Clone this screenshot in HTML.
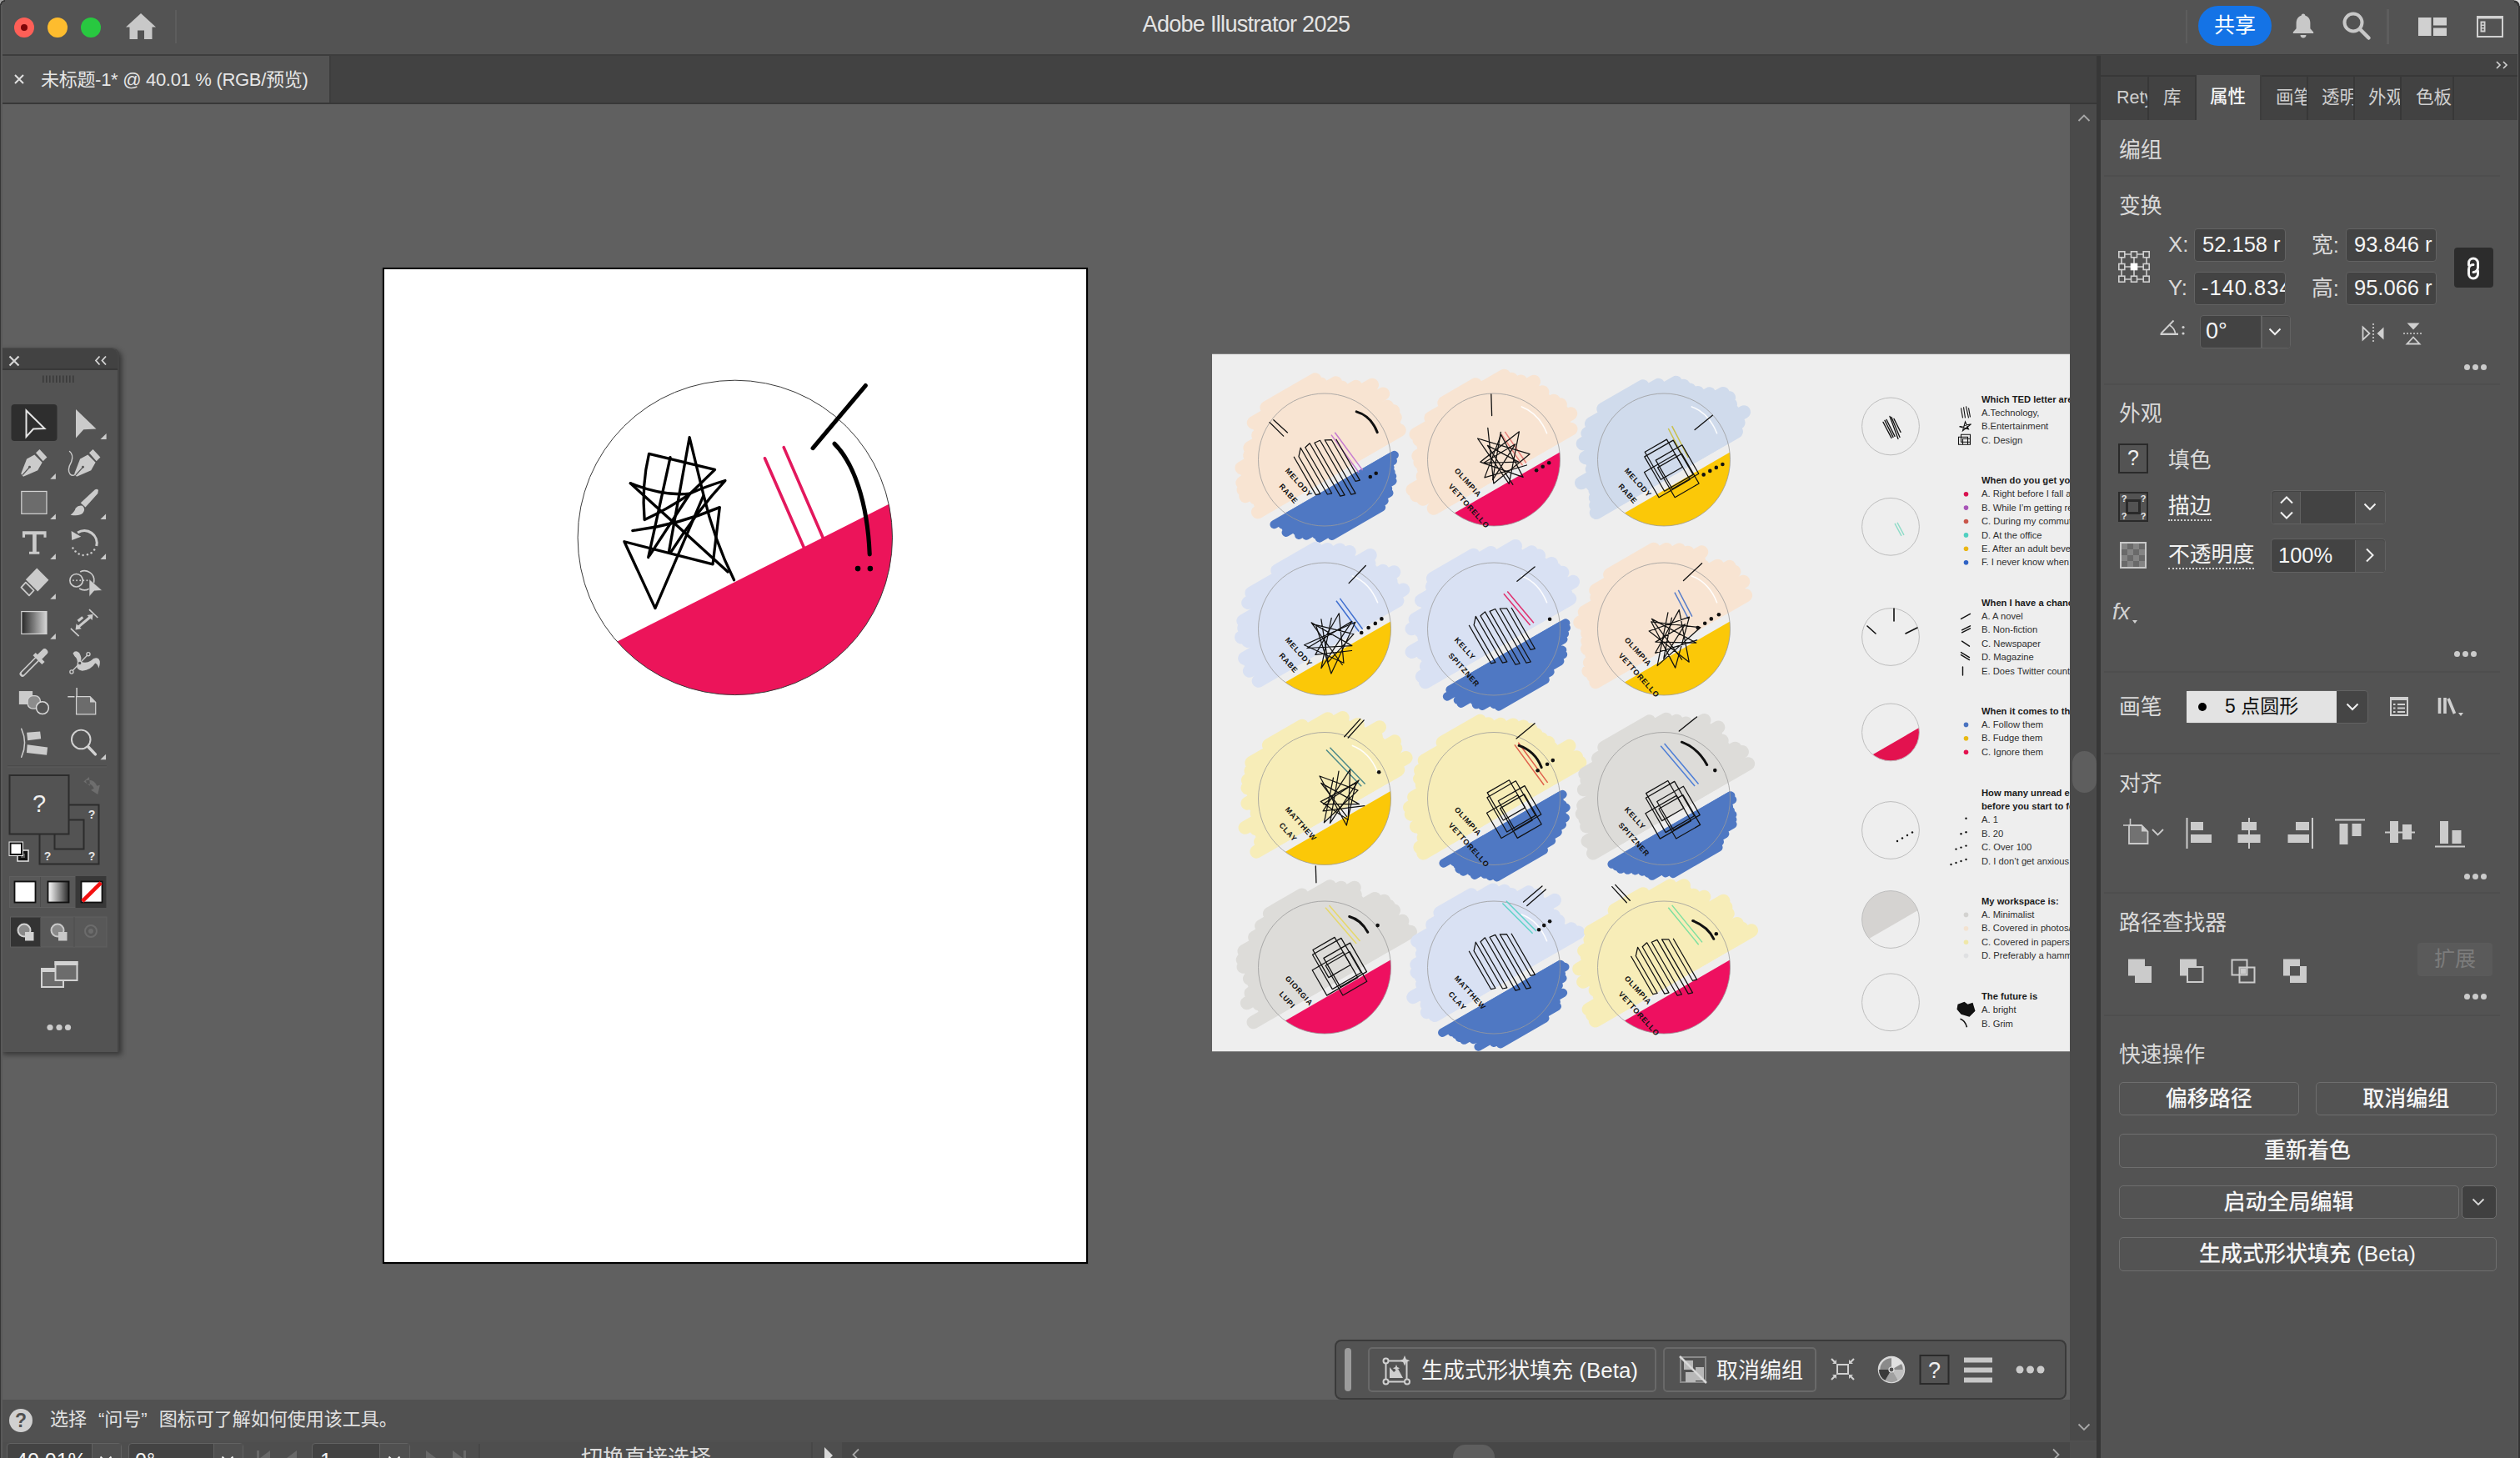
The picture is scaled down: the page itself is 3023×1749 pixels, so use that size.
<!DOCTYPE html>
<html lang="zh"><head><meta charset="utf-8"><title>Adobe Illustrator 2025</title>
<style>
*{box-sizing:border-box;margin:0;padding:0}
html,body{width:3023px;height:1749px;overflow:hidden;background:#606060;font-family:"Liberation Sans","Noto Sans CJK SC",sans-serif;color:#dcdcdc}
.a{position:absolute}
svg{position:absolute;overflow:visible}
#titlebar{left:0;top:0;width:3023px;height:67px;background:#535353;border-bottom:2px solid #3d3d3d}
#tabbar{left:0;top:67px;width:2516px;height:58px;background:#424242;border-bottom:2px solid #383838}
#doctab{left:0;top:0;width:397px;height:56px;background:#535353;border-right:2px solid #3d3d3d}
#canvas{left:0;top:125px;width:2483px;height:1554px;background:#606060;overflow:hidden}
#vscroll{left:2483px;top:125px;width:32px;height:1603px;background:#4a4a4a}
#vdiv{left:2515px;top:67px;width:5.500px;height:1682px;background:#373737}
#status{left:0;top:1679px;width:2483px;height:51px;background:#515151}
#bottombar{left:0;top:1730px;width:2516px;height:19px;background:#4e4e4e;overflow:hidden;box-shadow:0 -2px 0 #505050}
#rpanel{left:2520px;top:66px;width:503px;height:1683px;background:#535353}
.pg{position:absolute;left:-2520px;top:-66px;width:3023px;height:1749px}
.t{position:absolute;white-space:nowrap;font-size:25.800px;line-height:36px;color:#dadada}
.w{color:#f2f2f2}
.inp{position:absolute;background:#434343;border:1.500px solid #626262;border-radius:4px;color:#f5f5f5;font-size:25.500px;line-height:37px;white-space:nowrap;overflow:hidden}
.sep{position:absolute;left:2524px;width:475px;height:2px;background:#4e4e4e}
.btn{position:absolute;border:1.500px solid #6e6e6e;border-radius:5px;color:#f5f5f5;font-size:26px;font-weight:500;line-height:39px;text-align:center;white-space:nowrap}
.ptab{position:absolute;top:90px;height:54px;background:#424242;border-right:2px solid #383838;color:#cfcfcf;font-size:21.500px;line-height:52px;white-space:nowrap;overflow:hidden}
.dots i{position:absolute;width:7px;height:7px;border-radius:50%;background:#cbcbcb;top:0}
.ul{border-bottom:2px dotted #cfcfcf;line-height:31px}

</style></head><body>
<div id="titlebar" class="a"><div class="a" style="left:17px;top:21px;width:24px;height:24px;border-radius:50%;background:#fe5f57"></div>
<div class="a" style="left:25px;top:29px;width:8px;height:8px;border-radius:50%;background:#7e0508"></div>
<div class="a" style="left:57px;top:21px;width:24px;height:24px;border-radius:50%;background:#febc2e"></div>
<div class="a" style="left:97px;top:21px;width:24px;height:24px;border-radius:50%;background:#28c840"></div>
<svg style="left:151px;top:16px" width="36" height="32" viewBox="0 0 36 32"><path d="M18 0 L36 16.5 L31.5 16.5 L31.5 31 L22 31 L22 20.5 L14 20.5 L14 31 L4.5 31 L4.5 16.5 L0 16.5 Z" fill="#c8c8c8"/></svg>
<div class="a" style="left:210px;top:12px;width:2px;height:40px;background:#5d5d5d"></div>
<div class="a" id="apptitle" style="left:1295px;top:12px;width:400px;text-align:center;font-size:27px;line-height:34px;color:#e4e4e4;letter-spacing:-0.7px">Adobe Illustrator 2025</div>
<div class="a" style="left:2622px;top:12px;width:2px;height:40px;background:#5d5d5d"></div>
<div class="a" style="left:2637px;top:7px;width:88px;height:48px;border-radius:24px;background:#1473e6;color:#fff;font-size:25px;line-height:47px;text-align:center">共享</div>
<svg style="left:2749px;top:16px" width="28" height="30" viewBox="0 0 28 30"><path d="M14 0.5c1.5 0 2.4 1 2.4 2.3c4 1.2 6 4.600 6 9v6.500l3.800 4.200v1.500h-24.400v-1.500l3.800-4.200v-6.500c0-4.400 2-7.800 6-9c0-1.300 0.900-2.300 2.400-2.300z M10.500 26h7c0 2-1.500 3.500-3.500 3.500s-3.500-1.500-3.500-3.500z" fill="#c8c8c8"/></svg>
<svg style="left:2810px;top:14px" width="34" height="34" viewBox="0 0 34 34"><circle cx="13" cy="13" r="10.500" fill="none" stroke="#c8c8c8" stroke-width="4"/><path d="M21 21 L31.500 31.500" stroke="#c8c8c8" stroke-width="4.500" stroke-linecap="round"/></svg>
<div class="a" style="left:2863px;top:11px;width:3px;height:42px;background:#5d5d5d"></div>
<svg style="left:2901px;top:21px" width="34" height="22" viewBox="0 0 34 22"><rect x="0" y="0" width="15.500" height="22" fill="#d0d0d0"/><rect x="18" y="0" width="16" height="9.500" fill="#d0d0d0"/><rect x="18" y="12.500" width="16" height="9.500" fill="#d0d0d0"/></svg>
<svg style="left:2971px;top:19px" width="32" height="26" viewBox="0 0 32 26"><rect x="1" y="1" width="30" height="24" fill="none" stroke="#d0d0d0" stroke-width="2"/><rect x="0" y="0" width="32" height="3.500" fill="#d0d0d0"/><rect x="4.500" y="6.500" width="6" height="13" fill="#d0d0d0"/><rect x="6.300" y="8.500" width="2.400" height="2" fill="#535353"/><rect x="6.300" y="12" width="2.400" height="2" fill="#535353"/><rect x="6.300" y="15.500" width="2.400" height="2" fill="#535353"/></svg>
</div>
<div id="tabbar" class="a"><div id="doctab" class="a"><svg style="left:17px;top:22px" width="12" height="12" viewBox="0 0 12 12"><path d="M1 1L11 11M11 1L1 11" stroke="#e0e0e0" stroke-width="2"/></svg>
<div class="a" style="left:49px;top:12px;font-size:22px;line-height:34px;color:#e6e6e6;white-space:nowrap;letter-spacing:-0.3px">未标题-1* @ 40.01 % (RGB/预览)</div>
</div></div>
<div id="canvas" class="a"><div class="a" style="left:459px;top:196px;width:846px;height:1195px;background:#fff;border:2px solid #000;box-shadow:1px 1px 0 #555,-1.500px 0 0 #585858"></div>
<svg style="left:0;top:-125px" width="2485" height="1680" viewBox="0 0 2485 1680">
<defs><clipPath id="mc"><circle cx="881.8" cy="644.9" r="188.7"/></clipPath></defs>
<g transform="translate(640 400) scale(0.32916)" fill="none" stroke="#e3185d" stroke-width="11" stroke-linecap="round"><path d="M843 455 L992 795"/><path d="M912 415 L1065 768"/></g>
<g clip-path="url(#mc)"><path d="M742 768.7 L1066.3 604.7 L1200 540 L1200 900 L600 900 L600 840 Z" fill="#ec145a"/></g>
<circle cx="881.8" cy="644.9" r="188.7" fill="none" stroke="#3a3a3a" stroke-width="1"/>
<g transform="translate(640 400) scale(0.32916)" fill="none" stroke="#000" stroke-linecap="round" stroke-linejoin="round">

<g stroke-width="15.500"><path d="M1018 418 L1210 190"/><path d="M1097 402 C1165 470 1217 610 1225 805"/></g>
<circle cx="1182" cy="857" r="10" fill="#000" stroke="none"/><circle cx="1227" cy="857" r="10" fill="#000" stroke="none"/>
</g>
<g transform="translate(730 500) scale(0.16458)" fill="none" stroke="#000" stroke-width="20" stroke-linecap="round" stroke-linejoin="round">
<path d="M290 1025L450 295"/>
<path d="M440 985L590 150L690 560Q770 900 915 1190"/>
<path d="M295 270L775 385L590 565Q420 680 262 750Q240 500 295 270"/>
<path d="M160 485Q400 580 590 560Q730 500 850 465Q650 680 455 985"/>
<path d="M175 830Q500 790 810 660L760 1075L115 910L340 1395L690 580"/>
<path d="M160 485L870 1130"/>
<path d="M590 565L300 1010"/>
</g>
<clipPath id="imgclip"><rect x="1454" y="424.5" width="1106" height="837.0"/></clipPath>
<g id="refimg" clip-path="url(#imgclip)"><rect x="1454" y="424.5" width="1106" height="837.0" fill="#eeeeee"/>
<clipPath id="bc1"><circle cx="1589" cy="551.5" r="79.5"/></clipPath>
<path d="M1508.9 614.3L1678.8 516.2M1511.6 603.5L1672.9 510.4M1506.2 597.5L1673.8 500.7M1494.2 595.2L1671.4 492.9M1491.5 587.6L1664.3 487.8M1490.3 579.1L1651.6 486M1495.8 566.7L1659.2 472.4M1489.4 561.3L1640.2 474.2M1499.2 546.4L1646.1 461.6M1499.3 537.2L1626.5 463.8M1509.2 522.3L1609.6 464.4M1510.8 512.2L1602.4 459.3M1503.7 507.1L1584.5 460.5M1519.4 488.9L1577.5 455.3" stroke="#f8e4d2" stroke-width="15.9" stroke-linecap="round" fill="none"/>
<path clip-path="url(#bc1)" d="M1462.4 650.3L1737.8 491.3L1647.2 334.3L1371.8 493.3Z" fill="#f8e4d2"/>
<path clip-path="url(#bc1)" d="M1462.4 650.3L1737.8 491.3L1743 500.2L1467.6 659.2Z" fill="#eeeeee"/>
<path d="M1528.6 629.1L1672.7 545.9M1538.4 629.4L1670.8 552.9M1542.5 632.9L1667.4 560.9M1542.7 638.8L1668.5 566.2M1555.6 637.3L1670.1 571.2M1558.2 641.8L1670.4 577M1567.1 642.6L1665 586.1M1579.2 641.6L1666.3 591.3M1582.7 645.5L1660.5 600.7M1597.8 642.8L1657 608.6" stroke="#4f78c3" stroke-width="10.3" stroke-linecap="round" fill="none"/>
<path clip-path="url(#bc1)" d="M1467.2 658.5L1742.6 499.5L1806.2 609.7L1530.8 768.7Z" fill="#4f78c3"/>
<circle cx="1589" cy="551.5" r="79.5" fill="none" stroke="#9b9b9b" stroke-width="0.8"/>
<path d="M1597 521.6L1630.2 566.9M1601.3 518.8L1634.6 564.1" stroke="#c77bd0" stroke-width="1.5" fill="none"/>
<g fill="none" stroke="#111" stroke-width="1.25" stroke-linejoin="round" stroke-linecap="round"><polyline points="1552.3,548.2 1578.5,593.6 1583.8,592.4 1558,547.7 1560.2,537.2 1592.4,593 1597.6,591.8 1565.8,536.7 1571.2,531.8 1607.8,595.1 1613.1,593.9 1576.9,531.2 1583.5,528.3 1620.9,593.1 1626.1,591.9 1589.2,527.8 1597.4,527.7 1626,577.3 1631.3,576.1 1603,527.2"/></g>
<circle cx="1643.8" cy="572" r="2.3" fill="#111"/>
<circle cx="1650.7" cy="567.8" r="2.3" fill="#111"/>
<g fill="none" stroke="#111" stroke-width="1.3" stroke-linecap="round"><path d="M1523 506.6L1539.7 523.1"/><path d="M1527.8 503.8L1544.5 518.9"/><path d="M1627.2 493.9Q1644.7 499 1652.2 518.6" stroke-width="3"/></g>
<g transform="translate(1541.3 565) rotate(48)" font-size="9" font-weight="bold" fill="#111" font-family="Liberation Sans,sans-serif" letter-spacing="0.800"><text x="0" y="0">MELODY</text><text x="9" y="18">RABE</text></g>
<clipPath id="bc2"><circle cx="1792" cy="551.5" r="79.5"/></clipPath>
<path d="M1719.7 609.8L1884.5 514.6M1721 599.8L1876.8 509.9M1707 598.8L1884.3 496.3M1699 594.2L1874 493.1M1694.5 587.6L1871.9 485.2M1706.7 571.4L1863.9 480.6M1707.5 561.7L1852.3 478.2M1703.4 554.9L1850.4 470.1M1701.3 547L1839.6 467.1M1707.3 534.3L1840.1 457.7M1702.5 527.9L1824.5 457.5M1698.5 521L1813.3 454.7M1716.4 501.5L1804.4 450.7M1732.3 483.2L1770.2 461.2" stroke="#f8e4d2" stroke-width="15.9" stroke-linecap="round" fill="none"/>
<path clip-path="url(#bc2)" d="M1665.4 650.3L1940.8 491.3L1850.2 334.3L1574.8 493.3Z" fill="#f8e4d2"/>
<path clip-path="url(#bc2)" d="M1665.4 650.3L1940.8 491.3L1946 500.2L1670.6 659.2Z" fill="#eeeeee"/>
<path clip-path="url(#bc2)" d="M1670.2 658.5L1945.6 499.5L2009.2 609.7L1733.8 768.7Z" fill="#ee1060"/>
<circle cx="1792" cy="551.5" r="79.5" fill="none" stroke="#9b9b9b" stroke-width="0.8"/>
<path d="M1825.4 487.9Q1846.1 495.9 1855.6 519.7" stroke="#fff" stroke-width="1.6" fill="none" stroke-linecap="round" opacity="0.9"/>
<path d="M1800.9 520.6L1826.5 558.3M1805.3 517.8L1830.9 555.5" stroke="#e9827c" stroke-width="1.5" fill="none"/>
<g fill="none" stroke="#111" stroke-width="1.25" stroke-linejoin="round" stroke-linecap="round"><polyline points="1831.5,558 1780.9,572.9 1800.7,521.5 1827.1,572.4 1775.7,554.2 1822.4,517.8 1810.3,580.4 1772.6,526 1835,544.7 1791.8,579.9 1784.8,513.4"/><polyline points="1814.9,581.3 1784.4,534.4 1821.6,554.1 1779.8,555.3 1817.7,532.8 1790.6,575.7 1800.3,518.4"/></g>
<circle cx="1843.1" cy="564.3" r="2.3" fill="#111"/>
<circle cx="1850.7" cy="559.8" r="2.3" fill="#111"/>
<circle cx="1858.2" cy="555.2" r="2.3" fill="#111"/>
<g fill="none" stroke="#111" stroke-width="1.3" stroke-linecap="round"><path d="M1788.8 472.8L1789.6 498.6"/></g>
<g transform="translate(1744.3 565) rotate(48)" font-size="9" font-weight="bold" fill="#111" font-family="Liberation Sans,sans-serif" letter-spacing="0.800"><text x="0" y="0">OLIMPIA</text><text x="9" y="18">VETTORELLO</text></g>
<clipPath id="bc3"><circle cx="1996" cy="551.5" r="79.5"/></clipPath>
<path d="M1914.7 615L2083 517.8M1914.2 606.1L2085.6 507.1M1913.8 597.1L2092.1 494.2M1913.4 588.2L2078.5 492.8M1909.7 581.2L2076 485.1M1897 579.3L2074.2 477M1909.7 562.8L2067.1 471.9M1909.4 553.8L2050.5 472.3M1901.8 549L2036.8 471M1907.4 536.6L2027 467.5M1898.7 532.4L2019.7 462.6M1904.4 519.9L2010.4 458.8M1908.9 508.2L1989.3 461.8M1923.3 490.6L1970.7 463.3" stroke="#d0dbec" stroke-width="15.9" stroke-linecap="round" fill="none"/>
<path clip-path="url(#bc3)" d="M1869.4 650.3L2144.8 491.3L2054.2 334.3L1778.8 493.3Z" fill="#d0dbec"/>
<path clip-path="url(#bc3)" d="M1869.4 650.3L2144.8 491.3L2150 500.2L1874.6 659.2Z" fill="#eeeeee"/>
<path clip-path="url(#bc3)" d="M1874.2 658.5L2149.6 499.5L2213.2 609.7L1937.8 768.7Z" fill="#fbc808"/>
<circle cx="1996" cy="551.5" r="79.5" fill="none" stroke="#9b9b9b" stroke-width="0.8"/>
<path d="M2029.4 487.9Q2050.1 495.9 2059.6 519.7" stroke="#fff" stroke-width="1.6" fill="none" stroke-linecap="round" opacity="0.9"/>
<path d="M2001.3 514L2021 551.8M2005.7 511.2L2025.3 549" stroke="#c9c04a" stroke-width="1.5" fill="none"/>
<g fill="none" stroke="#111" stroke-width="1.25" stroke-linejoin="round" stroke-linecap="round"><polygon points="1972.8,547.9 2007.2,528.1 2031.1,569.4 1996.7,589.2"/><polygon points="1986.3,552.1 2017.9,533.8 2037.8,568.3 2006.1,586.5"/><polygon points="1972.5,566.5 2009.7,545 2027.2,575.3 1990,596.8"/><polygon points="1988.6,560.9 2017.5,544.2 2038.1,580 2009.2,596.7"/><polygon points="1973.2,542.2 1999.4,527.1 2018.4,560.2 1992.3,575.3"/></g>
<circle cx="2043.7" cy="569.4" r="2.3" fill="#111"/>
<circle cx="2051.3" cy="564.9" r="2.3" fill="#111"/>
<circle cx="2058.8" cy="560.9" r="2.3" fill="#111"/>
<circle cx="2066.4" cy="557" r="2.3" fill="#111"/>
<g fill="none" stroke="#111" stroke-width="1.3" stroke-linecap="round"><path d="M2033.1 515.5L2054.3 498.2"/></g>
<g transform="translate(1948.3 565) rotate(48)" font-size="9" font-weight="bold" fill="#111" font-family="Liberation Sans,sans-serif" letter-spacing="0.800"><text x="0" y="0">MELODY</text><text x="9" y="18">RABE</text></g>
<clipPath id="bc4"><circle cx="1589" cy="754.5" r="79.5"/></clipPath>
<path d="M1509.6 816.8L1676.4 720.6M1515.9 804L1683.3 707.4M1498.8 804.8L1671.6 705M1499.8 795L1668.6 697.5M1493.1 789.7L1672.3 686.2M1508.1 771.9L1658.9 684.8M1497 769.1L1644.9 683.7M1489 764.5L1642.5 675.9M1492.2 753.5L1643.8 665.9M1491.3 744.8L1619.3 670.9M1508.7 725.6L1618.8 662M1497.1 723.1L1607.3 659.5M1501.4 711.4L1592.4 658.9M1532.3 684.4L1578.4 657.8" stroke="#d9e1f3" stroke-width="15.9" stroke-linecap="round" fill="none"/>
<path clip-path="url(#bc4)" d="M1462.4 853.3L1737.8 694.3L1647.2 537.3L1371.8 696.3Z" fill="#d9e1f3"/>
<path clip-path="url(#bc4)" d="M1462.4 853.3L1737.8 694.3L1743 703.2L1467.6 862.2Z" fill="#eeeeee"/>
<path clip-path="url(#bc4)" d="M1467.2 861.5L1742.6 702.5L1806.2 812.7L1530.8 971.7Z" fill="#fbc808"/>
<circle cx="1589" cy="754.5" r="79.5" fill="none" stroke="#9b9b9b" stroke-width="0.8"/>
<path d="M1622.4 690.9Q1643.1 698.9 1652.6 722.7" stroke="#fff" stroke-width="1.6" fill="none" stroke-linecap="round" opacity="0.9"/>
<path d="M1603 720.7L1630.2 757.5M1607.4 717.9L1634.6 754.7" stroke="#3f6fd0" stroke-width="1.5" fill="none"/>
<g fill="none" stroke="#111" stroke-width="1.25" stroke-linejoin="round" stroke-linecap="round"><polyline points="1621.5,780.5 1577.9,785.4 1606.3,735.8 1611.9,795.2 1564.5,773.7 1625.9,746.3 1596.9,808 1578.5,749.7 1623.9,760.6 1593.1,794.4 1584.9,742.8"/><polyline points="1610.3,797.5 1573.1,746.9 1621.8,774.6 1568,777.5 1621.8,745.4 1584.9,801.6 1597.2,741.4"/></g>
<circle cx="1633.2" cy="759" r="2.3" fill="#111"/>
<circle cx="1641.6" cy="753" r="2.3" fill="#111"/>
<circle cx="1649.8" cy="747.9" r="2.3" fill="#111"/>
<circle cx="1657.4" cy="742.4" r="2.3" fill="#111"/>
<g fill="none" stroke="#111" stroke-width="1.3" stroke-linecap="round"><path d="M1618.1 699.6L1638.3 678.5"/></g>
<g transform="translate(1541.3 768) rotate(48)" font-size="9" font-weight="bold" fill="#111" font-family="Liberation Sans,sans-serif" letter-spacing="0.800"><text x="0" y="0">MELODY</text><text x="9" y="18">RABE</text></g>
<clipPath id="bc5"><circle cx="1792" cy="754.5" r="79.5"/></clipPath>
<path d="M1709.9 818.4L1883.3 718.3M1705.9 811.6L1878.4 711.9M1710.9 799.5L1887.1 697.8M1712.3 789.5L1873.8 696.2M1706.3 783.8L1874.4 686.7M1693.5 782L1865.6 682.6M1708.2 764.3L1861.3 675.9M1704.4 757.3L1848.1 674.4M1693.5 754.4L1846.1 666.4M1697.6 742.9L1837.3 662.3M1712.1 725.3L1819.3 663.5M1705 720.3L1818 655M1717.9 703.7L1788.5 662.9M1718.9 693.9L1767.7 665.7" stroke="#d9e1f3" stroke-width="15.9" stroke-linecap="round" fill="none"/>
<path clip-path="url(#bc5)" d="M1665.4 853.3L1940.8 694.3L1850.2 537.3L1574.8 696.3Z" fill="#d9e1f3"/>
<path clip-path="url(#bc5)" d="M1665.4 853.3L1940.8 694.3L1946 703.2L1670.6 862.2Z" fill="#eeeeee"/>
<path d="M1739.5 827.5L1878.2 747.4M1736 835.5L1878.8 753.1M1750.3 833.2L1876.9 760.1M1748.9 839.9L1875.3 767M1752.6 843.8L1868.5 776.9M1768.5 840.6L1874.1 779.6M1770.9 845.2L1875 785.1M1778.2 846.9L1871.2 793.2M1792.1 844.8L1859.5 806M1797.8 847.5L1853.6 815.3" stroke="#4f78c3" stroke-width="10.3" stroke-linecap="round" fill="none"/>
<path clip-path="url(#bc5)" d="M1670.2 861.5L1945.6 702.5L2009.2 812.7L1733.8 971.7Z" fill="#4f78c3"/>
<circle cx="1792" cy="754.5" r="79.5" fill="none" stroke="#9b9b9b" stroke-width="0.8"/>
<path d="M1825.4 690.9Q1846.1 698.9 1855.6 722.7" stroke="#fff" stroke-width="1.6" fill="none" stroke-linecap="round" opacity="0.9"/>
<path d="M1803.9 712.3L1835.6 750M1808.3 709.5L1839.9 747.2" stroke="#e0306e" stroke-width="1.5" fill="none"/>
<g fill="none" stroke="#111" stroke-width="1.25" stroke-linejoin="round" stroke-linecap="round"><polyline points="1762.4,750.3 1788.7,795.8 1793.9,794.6 1768.1,749.8 1770.3,739.4 1802.5,795.1 1807.8,793.9 1776,738.8 1781.4,733.9 1818,797.2 1823.2,796 1787.1,733.4 1793.7,730.5 1831,795.2 1836.3,794 1799.3,730 1807.5,729.8 1836.1,779.4 1841.4,778.2 1813.2,729.3"/></g>
<circle cx="1859.1" cy="742.7" r="2.3" fill="#111"/>
<g fill="none" stroke="#111" stroke-width="1.3" stroke-linecap="round"><path d="M1819.9 697.3L1841.1 680"/></g>
<g transform="translate(1744.3 768) rotate(48)" font-size="9" font-weight="bold" fill="#111" font-family="Liberation Sans,sans-serif" letter-spacing="0.800"><text x="0" y="0">KELLY</text><text x="9" y="18">SPITZNER</text></g>
<clipPath id="bc6"><circle cx="1996" cy="754.5" r="79.5"/></clipPath>
<path d="M1914.3 818.2L2094.2 714.3M1911.1 810.9L2086.6 709.5M1905.4 805L2091.3 697.6M1906.9 794.9L2077.4 696.5M1909 784.5L2080.4 685.6M1904 778.2L2074.6 679.8M1904.3 768.9L2060.5 678.7M1904.1 759.8L2043.3 679.5M1902.6 751.5L2038.4 673.1M1895.2 746.6L2041.3 662.3M1900.7 734.2L2024.8 662.6M1915.3 716.7L2014.5 659.4M1914.2 708.1L1999.2 659M1931.1 689.1L1983.9 658.7" stroke="#f8e4d2" stroke-width="15.9" stroke-linecap="round" fill="none"/>
<path clip-path="url(#bc6)" d="M1869.4 853.3L2144.8 694.3L2054.2 537.3L1778.8 696.3Z" fill="#f8e4d2"/>
<path clip-path="url(#bc6)" d="M1869.4 853.3L2144.8 694.3L2150 703.2L1874.6 862.2Z" fill="#eeeeee"/>
<path clip-path="url(#bc6)" d="M1874.2 861.5L2149.6 702.5L2213.2 812.7L1937.8 971.7Z" fill="#fbc808"/>
<circle cx="1996" cy="754.5" r="79.5" fill="none" stroke="#9b9b9b" stroke-width="0.8"/>
<path d="M2029.4 690.9Q2050.1 698.9 2059.6 722.7" stroke="#fff" stroke-width="1.6" fill="none" stroke-linecap="round" opacity="0.9"/>
<path d="M2008.9 710.6L2025.5 742.4M2013.3 707.8L2029.9 739.6" stroke="#5b7fc9" stroke-width="1.5" fill="none"/>
<g fill="none" stroke="#111" stroke-width="1.25" stroke-linejoin="round" stroke-linecap="round"><polyline points="2035.7,767.8 1985.7,783.3 2014.3,731.6 2026.2,794.2 1978.2,757 2026.5,740.1 2009.7,801.1 1980.8,745.8 2039.8,752.7 1988.1,798.6 2000.9,734.8"/><polyline points="2017.6,791.2 1981.4,742.4 2034.7,771.1 1985.9,770.1 2021.5,748.9 1995.7,790.2 2005.4,741.1"/></g>
<circle cx="2036.7" cy="753" r="2.3" fill="#111"/>
<circle cx="2045.2" cy="747.8" r="2.3" fill="#111"/>
<circle cx="2052.8" cy="742.4" r="2.3" fill="#111"/>
<circle cx="2061.9" cy="737.2" r="2.3" fill="#111"/>
<g fill="none" stroke="#111" stroke-width="1.3" stroke-linecap="round"><path d="M2019.5 696.5L2041.6 675.8"/></g>
<g transform="translate(1948.3 768) rotate(48)" font-size="9" font-weight="bold" fill="#111" font-family="Liberation Sans,sans-serif" letter-spacing="0.800"><text x="0" y="0">OLIMPIA</text><text x="9" y="18">VETTORELLO</text></g>
<clipPath id="bc7"><circle cx="1589" cy="958" r="79.5"/></clipPath>
<path d="M1507.3 1021.7L1677.3 923.5M1512 1009.8L1686.6 909M1513.2 999.9L1669.7 909.6M1506.9 994.4L1674.3 897.7M1493.5 992.9L1673 889.3M1507.6 975.6L1654.1 891M1506 967.4L1650.9 883.7M1496.4 963.7L1655 872.2M1503.1 950.7L1631 876.9M1496.5 945.3L1628.8 868.9M1496.9 935.9L1612.4 869.2M1500.4 924.7L1610.7 861M1501.3 915L1592.9 862.1M1521.9 893.9L1562.1 870.7" stroke="#f7edb8" stroke-width="15.9" stroke-linecap="round" fill="none"/>
<path clip-path="url(#bc7)" d="M1462.4 1056.8L1737.8 897.8L1647.2 740.8L1371.8 899.8Z" fill="#f7edb8"/>
<path clip-path="url(#bc7)" d="M1462.4 1056.8L1737.8 897.8L1743 906.7L1467.6 1065.7Z" fill="#eeeeee"/>
<path clip-path="url(#bc7)" d="M1467.2 1065L1742.6 906L1806.2 1016.2L1530.8 1175.2Z" fill="#fbc808"/>
<circle cx="1589" cy="958" r="79.5" fill="none" stroke="#9b9b9b" stroke-width="0.8"/>
<path d="M1622.4 894.4Q1643.1 902.4 1652.6 926.2" stroke="#fff" stroke-width="1.6" fill="none" stroke-linecap="round" opacity="0.9"/>
<path d="M1591 899.5L1633.2 943.2M1595.4 896.7L1637.6 940.4" stroke="#4d8a8a" stroke-width="1.5" fill="none"/>
<g fill="none" stroke="#111" stroke-width="1.25" stroke-linejoin="round" stroke-linecap="round"><polyline points="1636.8,966.6 1587.1,972.9 1619.6,923.2 1617.2,983.4 1584.2,961.6 1626.4,939.4 1615.3,990 1583,931 1629,948.1 1588.4,986.8 1599.5,933"/><polyline points="1615.5,979.3 1584.7,939.4 1630.4,964.6 1587.4,964.5 1630.2,935.9 1595.5,987.4 1606,925.1"/></g>
<circle cx="1654.2" cy="926.2" r="2.3" fill="#111"/>
<g fill="none" stroke="#111" stroke-width="1.3" stroke-linecap="round"><path d="M1612.7 883.7L1631.7 862.6"/><path d="M1617.2 885L1636.2 863.9"/><path d="M1578.3 1038.9L1578.9 1058.8"/></g>
<g transform="translate(1541.3 971.5) rotate(48)" font-size="9" font-weight="bold" fill="#111" font-family="Liberation Sans,sans-serif" letter-spacing="0.800"><text x="0" y="0">MATTHEW</text><text x="9" y="18">CLAY</text></g>
<clipPath id="bc8"><circle cx="1792" cy="958" r="79.5"/></clipPath>
<path d="M1707.3 1023.5L1895.4 914.8M1703.4 1016.5L1891.1 908.1M1707.6 1004.9L1876.3 907.5M1706.8 996.2L1882.5 894.8M1698.9 991.5L1861.5 897.7M1702.1 980.5L1857.5 890.8M1692.7 976.8L1849.3 886.3M1691 968.6L1842.8 880.9M1696.1 956.4L1836.7 875.3M1705.8 941.7L1827.4 871.4M1703 934.1L1815.1 869.4M1704 924.4L1800.1 868.8M1708.7 912.4L1785.5 868.1M1730.6 890.7L1775.4 864.8" stroke="#f7edb8" stroke-width="15.9" stroke-linecap="round" fill="none"/>
<path clip-path="url(#bc8)" d="M1665.4 1056.8L1940.8 897.8L1850.2 740.8L1574.8 899.8Z" fill="#f7edb8"/>
<path clip-path="url(#bc8)" d="M1665.4 1056.8L1940.8 897.8L1946 906.7L1670.6 1065.7Z" fill="#eeeeee"/>
<path d="M1731.6 1035.5L1874.5 953M1744.6 1034L1870.8 961.1M1748.5 1037.7L1874.4 965M1750.5 1042.5L1878.5 968.7M1755.5 1045.6L1874 977.2M1765.3 1045.9L1877.7 981M1768.9 1049.8L1873.9 989.2M1781.2 1048.7L1868.6 998.2M1787.5 1051L1861 1008.6M1795.6 1052.3L1851.8 1019.9" stroke="#4f78c3" stroke-width="10.3" stroke-linecap="round" fill="none"/>
<path clip-path="url(#bc8)" d="M1670.2 1065L1945.6 906L2009.2 1016.2L1733.8 1175.2Z" fill="#4f78c3"/>
<circle cx="1792" cy="958" r="79.5" fill="none" stroke="#9b9b9b" stroke-width="0.8"/>
<path d="M1816.9 893.4L1852.2 941.7M1821.3 890.7L1856.6 938.9" stroke="#e0604c" stroke-width="1.5" fill="none"/>
<g fill="none" stroke="#111" stroke-width="1.25" stroke-linejoin="round" stroke-linecap="round"><polygon points="1783.9,956.7 1818.3,936.8 1842.1,978.1 1807.7,998"/><polygon points="1797.3,960.8 1829,942.6 1848.8,977 1817.2,995.3"/><polygon points="1783.5,975.2 1820.7,953.7 1838.2,984 1801,1005.5"/><polygon points="1799.6,969.6 1828.5,952.9 1849.2,988.7 1820.3,1005.4"/><polygon points="1784.2,950.9 1810.4,935.8 1829.5,968.9 1803.3,984"/></g>
<circle cx="1844.6" cy="924.2" r="2.3" fill="#111"/>
<circle cx="1856.1" cy="916.7" r="2.3" fill="#111"/>
<circle cx="1862.8" cy="912.1" r="2.3" fill="#111"/>
<g fill="none" stroke="#111" stroke-width="1.3" stroke-linecap="round"><path d="M1819 885.9L1841.1 867.8"/><path d="M1822.1 894.4Q1841.3 900.8 1849.2 920.6" stroke-width="3"/></g>
<g transform="translate(1744.3 971.5) rotate(48)" font-size="9" font-weight="bold" fill="#111" font-family="Liberation Sans,sans-serif" letter-spacing="0.800"><text x="0" y="0">OLIMPIA</text><text x="9" y="18">VETTORELLO</text></g>
<clipPath id="bc9"><circle cx="1996" cy="958" r="79.5"/></clipPath>
<path d="M1911 1023.6L2097.2 916.1M1911 1014.4L2081.7 915.9M1904.5 1009L2090 901.9M1916.9 992.7L2081.5 897.6M1903.2 991.4L2067.7 896.4M1901.6 983.1L2065.7 888.4M1897.7 976.2L2058.8 883.2M1899.1 966.2L2061.4 872.5M1912.9 949.1L2045.4 872.6M1899.9 947.4L2044.5 863.9M1903.4 936.2L2022.5 867.4M1901.3 928.2L2011.2 864.8M1917 910L1998.9 862.7M1924.3 896.6L1978.5 865.3" stroke="#dddcd9" stroke-width="15.9" stroke-linecap="round" fill="none"/>
<path clip-path="url(#bc9)" d="M1869.4 1056.8L2144.8 897.8L2054.2 740.8L1778.8 899.8Z" fill="#dddcd9"/>
<path clip-path="url(#bc9)" d="M1869.4 1056.8L2144.8 897.8L2150 906.7L1874.6 1065.7Z" fill="#eeeeee"/>
<path d="M1933.6 1036.7L2076.2 954.4M1939.3 1039.4L2078.1 959.3M1944 1042.7L2073.9 967.6M1952.4 1043.7L2075.8 972.5M1961.6 1044.4L2078.2 977.1M1970 1045.5L2078.2 983.1M1977 1047.5L2078.4 988.9M1981.7 1050.7L2069.2 1000.2M1997.9 1047.3L2062.8 1009.9M2007 1048L2061.4 1016.6" stroke="#4f78c3" stroke-width="10.3" stroke-linecap="round" fill="none"/>
<path clip-path="url(#bc9)" d="M1874.2 1065L2149.6 906L2213.2 1016.2L1937.8 1175.2Z" fill="#4f78c3"/>
<circle cx="1996" cy="958" r="79.5" fill="none" stroke="#9b9b9b" stroke-width="0.8"/>
<path d="M1992.2 894.7L2033.1 943.1M1996.6 891.9L2037.5 940.4" stroke="#4f7fd6" stroke-width="1.5" fill="none"/>
<g fill="none" stroke="#111" stroke-width="1.25" stroke-linejoin="round" stroke-linecap="round"><polygon points="1974.3,957.3 2008.7,937.4 2032.5,978.7 1998.1,998.6"/><polygon points="1987.7,961.5 2019.4,943.2 2039.2,977.6 2007.6,995.9"/><polygon points="1973.9,975.8 2011.1,954.4 2028.6,984.7 1991.4,1006.1"/><polygon points="1990,970.2 2018.9,953.6 2039.6,989.4 2010.7,1006"/><polygon points="1974.6,951.6 2000.8,936.5 2019.9,969.5 1993.7,984.6"/></g>
<circle cx="2057.3" cy="924.1" r="2.3" fill="#111"/>
<g fill="none" stroke="#111" stroke-width="1.3" stroke-linecap="round"><path d="M2014.3 877.1L2035.5 859.9"/><path d="M2017.4 890.2Q2037.3 897.6 2047.7 917.5" stroke-width="3"/></g>
<g transform="translate(1948.3 971.5) rotate(48)" font-size="9" font-weight="bold" fill="#111" font-family="Liberation Sans,sans-serif" letter-spacing="0.800"><text x="0" y="0">KELLY</text><text x="9" y="18">SPITZNER</text></g>
<clipPath id="bc10"><circle cx="1589" cy="1160.5" r="79.5"/></clipPath>
<path d="M1503.5 1226.4L1692 1117.6M1516.3 1209.8L1683.6 1113.2M1510 1204.3L1682.4 1104.7M1495.8 1203.3L1671.7 1101.7M1500.5 1191.4L1672.1 1092.3M1504.4 1180L1665.8 1086.8M1498.9 1174L1660.4 1080.7M1500.1 1164.1L1649.3 1078M1491.5 1159.9L1628.4 1080.8M1490.7 1151.2L1625.8 1073.2M1492.4 1141L1624.8 1064.6M1505.1 1124.5L1608.9 1064.6M1513 1110.8L1595.4 1063.2M1522.9 1095.9L1561.8 1073.4" stroke="#dddcd9" stroke-width="15.9" stroke-linecap="round" fill="none"/>
<path clip-path="url(#bc10)" d="M1462.4 1259.3L1737.8 1100.3L1647.2 943.3L1371.8 1102.3Z" fill="#dddcd9"/>
<path clip-path="url(#bc10)" d="M1462.4 1259.3L1737.8 1100.3L1743 1109.2L1467.6 1268.2Z" fill="#eeeeee"/>
<path clip-path="url(#bc10)" d="M1467.2 1267.5L1742.6 1108.5L1806.2 1218.7L1530.8 1377.7Z" fill="#ee1060"/>
<circle cx="1589" cy="1160.5" r="79.5" fill="none" stroke="#9b9b9b" stroke-width="0.8"/>
<path d="M1590 1088.7L1627.2 1131.9M1594.4 1085.9L1631.5 1129.1" stroke="#e6d86a" stroke-width="1.5" fill="none"/>
<g fill="none" stroke="#111" stroke-width="1.25" stroke-linejoin="round" stroke-linecap="round"><polygon points="1574.5,1145.3 1608.9,1125.4 1632.8,1166.7 1598.3,1186.6"/><polygon points="1587.9,1149.4 1619.6,1131.1 1639.5,1165.6 1607.8,1183.9"/><polygon points="1574.2,1163.8 1611.4,1142.3 1628.8,1172.6 1591.7,1194.1"/><polygon points="1590.2,1158.2 1619.1,1141.5 1639.8,1177.3 1610.9,1194"/><polygon points="1574.9,1139.5 1601,1124.4 1620.1,1157.5 1593.9,1172.6"/></g>
<circle cx="1652.6" cy="1110.1" r="2.3" fill="#111"/>
<g fill="none" stroke="#111" stroke-width="1.3" stroke-linecap="round"><path d="M1618.7 1099.5Q1632.7 1103.3 1640.8 1118.3" stroke-width="3"/></g>
<g transform="translate(1541.3 1174) rotate(48)" font-size="9" font-weight="bold" fill="#111" font-family="Liberation Sans,sans-serif" letter-spacing="0.800"><text x="0" y="0">GIORGIA</text><text x="9" y="18">LUPI</text></g>
<clipPath id="bc11"><circle cx="1792" cy="1160.5" r="79.5"/></clipPath>
<path d="M1721 1218L1893.3 1118.5M1711.8 1214.2L1884.8 1114.3M1711.6 1205.1L1871 1113M1710.3 1196.7L1869.5 1104.8M1695.2 1196.2L1864.1 1098.7M1706 1180.8L1856.8 1093.7M1704.9 1172.2L1865 1079.8M1699.5 1166.2L1846.3 1081.4M1699.3 1157.1L1844 1073.6M1705.9 1144.1L1833.7 1070.3M1705.8 1135L1813.2 1073M1700.1 1129.1L1804.7 1068.7M1718.2 1109.5L1791.1 1067.4M1727.4 1095L1765 1073.3" stroke="#d9e1f3" stroke-width="15.9" stroke-linecap="round" fill="none"/>
<path clip-path="url(#bc11)" d="M1665.4 1259.3L1940.8 1100.3L1850.2 943.3L1574.8 1102.3Z" fill="#d9e1f3"/>
<path clip-path="url(#bc11)" d="M1665.4 1259.3L1940.8 1100.3L1946 1109.2L1670.6 1268.2Z" fill="#eeeeee"/>
<path d="M1730.2 1238.8L1872.2 1156.9M1741.7 1238.2L1877.3 1159.9M1746.9 1241.1L1872.9 1168.4M1750.8 1244.9L1874.4 1173.5M1756.3 1247.7L1869.7 1182.2M1767.6 1247.1L1869.1 1188.5M1775.9 1248.3L1875 1191M1773.6 1255.6L1866.7 1201.8M1792.1 1250.9L1867.8 1207.2M1800 1252.3L1853.3 1221.5" stroke="#4f78c3" stroke-width="10.3" stroke-linecap="round" fill="none"/>
<path clip-path="url(#bc11)" d="M1670.2 1267.5L1945.6 1108.5L2009.2 1218.7L1733.8 1377.7Z" fill="#4f78c3"/>
<circle cx="1792" cy="1160.5" r="79.5" fill="none" stroke="#9b9b9b" stroke-width="0.8"/>
<path d="M1825.4 1096.9Q1846.1 1104.8 1855.6 1128.7" stroke="#fff" stroke-width="1.6" fill="none" stroke-linecap="round" opacity="0.9"/>
<path d="M1802.4 1083.5L1838.6 1119.8M1806.8 1080.8L1843 1117" stroke="#5fd3c8" stroke-width="1.5" fill="none"/>
<g fill="none" stroke="#111" stroke-width="1.25" stroke-linejoin="round" stroke-linecap="round"><polyline points="1762.4,1141.2 1788.7,1186.7 1793.9,1185.5 1768.1,1140.7 1770.3,1130.2 1802.5,1186 1807.8,1184.8 1776,1129.7 1781.4,1124.8 1818,1188.1 1823.2,1186.9 1787.1,1124.3 1793.7,1121.4 1831,1186.1 1836.3,1184.9 1799.3,1120.8 1807.5,1120.7 1836.1,1170.3 1841.4,1169.1 1813.2,1120.2"/></g>
<circle cx="1846.1" cy="1115.2" r="2.3" fill="#111"/>
<circle cx="1852.2" cy="1110.1" r="2.3" fill="#111"/>
<circle cx="1859.1" cy="1105.2" r="2.3" fill="#111"/>
<g fill="none" stroke="#111" stroke-width="1.3" stroke-linecap="round"><path d="M1827.5 1082L1850 1063"/><path d="M1831.8 1086.6L1854.3 1067"/></g>
<g transform="translate(1744.3 1174) rotate(48)" font-size="9" font-weight="bold" fill="#111" font-family="Liberation Sans,sans-serif" letter-spacing="0.800"><text x="0" y="0">MATTHEW</text><text x="9" y="18">CLAY</text></g>
<clipPath id="bc12"><circle cx="1996" cy="1160.5" r="79.5"/></clipPath>
<path d="M1913.7 1224.5L2101.1 1116.3M1910.1 1217.4L2089.7 1113.7M1905.6 1210.8L2083.9 1107.9M1918.5 1194.2L2071.1 1106.1M1913.6 1187.9L2072.8 1096M1913 1179L2070.4 1088.1M1899.1 1177.9L2067.5 1080.7M1903.4 1166.3L2043.4 1085.4M1894.2 1162.4L2044.3 1075.7M1903.8 1147.6L2031.7 1073.8M1900.1 1140.6L2022.3 1070M1907.4 1127.2L2020 1062.2M1907.9 1117.7L2003.7 1062.4M1936.6 1092L1971.1 1072.1" stroke="#f7edb8" stroke-width="15.9" stroke-linecap="round" fill="none"/>
<path clip-path="url(#bc12)" d="M1869.4 1259.3L2144.8 1100.3L2054.2 943.3L1778.8 1102.3Z" fill="#f7edb8"/>
<path clip-path="url(#bc12)" d="M1869.4 1259.3L2144.8 1100.3L2150 1109.2L1874.6 1268.2Z" fill="#eeeeee"/>
<path clip-path="url(#bc12)" d="M1874.2 1267.5L2149.6 1108.5L2213.2 1218.7L1937.8 1377.7Z" fill="#ee1060"/>
<circle cx="1996" cy="1160.5" r="79.5" fill="none" stroke="#9b9b9b" stroke-width="0.8"/>
<path d="M2001.3 1088.7L2037.7 1133.2M2005.7 1085.9L2042 1130.4" stroke="#7fe0a0" stroke-width="1.5" fill="none"/>
<g fill="none" stroke="#111" stroke-width="1.25" stroke-linejoin="round" stroke-linecap="round"><polyline points="1956.7,1147.3 1982.9,1192.7 1988.2,1191.5 1962.3,1146.8 1964.6,1136.3 1996.8,1192.1 2002,1190.9 1970.2,1135.8 1975.6,1130.8 2012.2,1194.2 2017.5,1193 1981.3,1130.3 1987.9,1127.4 2025.3,1192.1 2030.5,1190.9 1993.6,1126.9 2001.7,1126.8 2030.4,1176.3 2035.6,1175.1 2007.4,1126.2"/></g>
<circle cx="2058.8" cy="1120.2" r="2.3" fill="#111"/>
<g fill="none" stroke="#111" stroke-width="1.3" stroke-linecap="round"><path d="M1933.8 1063.6L1951.3 1082.7"/><path d="M1937.7 1061.4L1955.3 1080.2"/><path d="M2030.7 1104.5Q2048.5 1111.2 2055.8 1126.3" stroke-width="3"/></g>
<g transform="translate(1948.3 1174) rotate(48)" font-size="9" font-weight="bold" fill="#111" font-family="Liberation Sans,sans-serif" letter-spacing="0.800"><text x="0" y="0">OLIMPIA</text><text x="9" y="18">VETTORELLO</text></g>
<circle cx="2268" cy="511.4" r="34.4" fill="none" stroke="#bdbdbd" stroke-width="1"/>
<circle cx="2268" cy="631.8" r="34.4" fill="none" stroke="#bdbdbd" stroke-width="1"/>
<circle cx="2268" cy="764" r="34.4" fill="none" stroke="#bdbdbd" stroke-width="1"/>
<clipPath id="lc3"><circle cx="2268" cy="878.4" r="34.4"/></clipPath>
<path clip-path="url(#lc3)" d="M2214.6 923.5L2333.8 854.7L2362 903.6L2242.8 972.4Z" fill="#e3124f"/>
<circle cx="2268" cy="878.4" r="34.4" fill="none" stroke="#bdbdbd" stroke-width="1"/>
<circle cx="2268" cy="996" r="34.4" fill="none" stroke="#bdbdbd" stroke-width="1"/>
<clipPath id="lc5"><circle cx="2268" cy="1103" r="34.4"/></clipPath>
<path clip-path="url(#lc5)" d="M2211.9 1143.4L2331 1074.6L2293.2 1009L2174 1077.8Z" fill="#d5d3d1"/>
<circle cx="2268" cy="1103" r="34.4" fill="none" stroke="#bdbdbd" stroke-width="1"/>
<circle cx="2268" cy="1202.3" r="34.4" fill="none" stroke="#bdbdbd" stroke-width="1"/>
<g fill="none" stroke="#111" stroke-width="1.3" stroke-linecap="round"><path d="M2259 506.4L2269 525.4M2263 503.4L2273 523.4M2267 499.4L2277 526.4M2272 502.4L2280 518.4M2261 504.4L2271 524.4M2269 500.4L2279 524.4"/></g>
<path d="M2273 627.8L2281 642.8M2276 626.8L2284 641.8" stroke="#8fdcc8" stroke-width="1.4" fill="none"/>
<g stroke="#111" stroke-width="1.6" stroke-linecap="round"><path d="M2272 730L2272 745M2240 751L2250 760M2286 760L2300 753"/></g>
<circle cx="2276" cy="1009" r="1.2" fill="#111"/>
<circle cx="2282" cy="1005.5" r="1.2" fill="#111"/>
<circle cx="2288" cy="1002" r="1.2" fill="#111"/>
<circle cx="2294" cy="998.5" r="1.2" fill="#111"/>
<text x="2377" y="482.6" font-size="11.200" font-weight="bold" fill="#1a1a1a" font-family="Liberation Sans,sans-serif">Which TED letter are you?</text>
<text x="2377" y="499" font-size="11.200" fill="#2e2e2e" font-family="Liberation Sans,sans-serif">A.Technology,</text>
<path d="M2352.5 489.4l2 12m1 -13l2 13m1 -14l3 14m0 -12l2 11" stroke="#111" stroke-width="1.1" fill="none"/>
<text x="2377" y="515.4" font-size="11.200" fill="#2e2e2e" font-family="Liberation Sans,sans-serif">B.Entertainment</text>
<path d="M2350.5 511.8l14 -3l-10 8l3 -11l4 9z" stroke="#111" stroke-width="1.1" fill="none"/>
<text x="2377" y="531.8" font-size="11.200" fill="#2e2e2e" font-family="Liberation Sans,sans-serif">C. Design</text>
<path d="M2349.5 524.2h11v9h-11zm3 -3h11v9h-11zm2 5h9v7h-9z" stroke="#111" stroke-width="1.1" fill="none"/>
<text x="2377" y="579.9" font-size="11.200" font-weight="bold" fill="#1a1a1a" font-family="Liberation Sans,sans-serif">When do you get your best ideas?</text>
<text x="2377" y="596.3" font-size="11.200" fill="#2e2e2e" font-family="Liberation Sans,sans-serif">A. Right before I fall asleep</text>
<circle cx="2358.5" cy="592.7" r="2.8" fill="#d8134f"/>
<text x="2377" y="612.7" font-size="11.200" fill="#2e2e2e" font-family="Liberation Sans,sans-serif">B. While I’m getting ready</text>
<circle cx="2358.5" cy="609.1" r="2.8" fill="#a855b8"/>
<text x="2377" y="629.1" font-size="11.200" fill="#2e2e2e" font-family="Liberation Sans,sans-serif">C. During my commute</text>
<circle cx="2358.5" cy="625.5" r="2.8" fill="#c9564a"/>
<text x="2377" y="645.5" font-size="11.200" fill="#2e2e2e" font-family="Liberation Sans,sans-serif">D. At the office</text>
<circle cx="2358.5" cy="641.9" r="2.8" fill="#4fcfc0"/>
<text x="2377" y="661.9" font-size="11.200" fill="#2e2e2e" font-family="Liberation Sans,sans-serif">E. After an adult beverage</text>
<circle cx="2358.5" cy="658.3" r="2.8" fill="#eab615"/>
<text x="2377" y="678.3" font-size="11.200" fill="#2e2e2e" font-family="Liberation Sans,sans-serif">F. I never know when</text>
<circle cx="2358.5" cy="674.7" r="2.8" fill="#2f62c4"/>
<text x="2377" y="726.6" font-size="11.200" font-weight="bold" fill="#1a1a1a" font-family="Liberation Sans,sans-serif">When I have a chance to read</text>
<text x="2377" y="743" font-size="11.200" fill="#2e2e2e" font-family="Liberation Sans,sans-serif">A. A novel</text>
<path d="M2352.5 742.4L2363.5 736.4" stroke="#111" stroke-width="1.4" stroke-linecap="round" fill="none"/>
<text x="2377" y="759.4" font-size="11.200" fill="#2e2e2e" font-family="Liberation Sans,sans-serif">B. Non-fiction</text>
<path d="M2353.5 758.8L2363.5 753.8M2353.5 755.8L2363.5 750.8" stroke="#111" stroke-width="1.4" stroke-linecap="round" fill="none"/>
<text x="2377" y="775.8" font-size="11.200" fill="#2e2e2e" font-family="Liberation Sans,sans-serif">C. Newspaper</text>
<path d="M2353.5 769.2L2362.5 775.2" stroke="#111" stroke-width="1.4" stroke-linecap="round" fill="none"/>
<text x="2377" y="792.2" font-size="11.200" fill="#2e2e2e" font-family="Liberation Sans,sans-serif">D. Magazine</text>
<path d="M2352.5 785.6L2362.5 791.6M2352.5 782.6L2362.5 788.6" stroke="#111" stroke-width="1.4" stroke-linecap="round" fill="none"/>
<text x="2377" y="808.6" font-size="11.200" fill="#2e2e2e" font-family="Liberation Sans,sans-serif">E. Does Twitter count?</text>
<path d="M2354.5 800L2354.5 810" stroke="#111" stroke-width="1.4" stroke-linecap="round" fill="none"/>
<text x="2377" y="856.6" font-size="11.200" font-weight="bold" fill="#1a1a1a" font-family="Liberation Sans,sans-serif">When it comes to the rules</text>
<text x="2377" y="873" font-size="11.200" fill="#2e2e2e" font-family="Liberation Sans,sans-serif">A. Follow them</text>
<circle cx="2358.5" cy="869.4" r="2.8" fill="#4a73c0"/>
<text x="2377" y="889.4" font-size="11.200" fill="#2e2e2e" font-family="Liberation Sans,sans-serif">B. Fudge them</text>
<circle cx="2358.5" cy="885.8" r="2.8" fill="#e8b913"/>
<text x="2377" y="905.8" font-size="11.200" fill="#2e2e2e" font-family="Liberation Sans,sans-serif">C. Ignore them</text>
<circle cx="2358.5" cy="902.2" r="2.8" fill="#e3124f"/>
<text x="2377" y="954.6" font-size="11.200" font-weight="bold" fill="#1a1a1a" font-family="Liberation Sans,sans-serif">How many unread emails</text>
<text x="2377" y="971" font-size="11.200" font-weight="bold" fill="#1a1a1a" font-family="Liberation Sans,sans-serif">before you start to feel anxious</text>
<text x="2377" y="987.4" font-size="11.200" fill="#2e2e2e" font-family="Liberation Sans,sans-serif">A.  1</text>
<circle cx="2358.5" cy="981.8" r="1.2" fill="#111"/>
<text x="2377" y="1003.8" font-size="11.200" fill="#2e2e2e" font-family="Liberation Sans,sans-serif">B. 20</text>
<circle cx="2358.5" cy="998.2" r="1.2" fill="#111"/>
<circle cx="2352.5" cy="1000.2" r="1.2" fill="#111"/>
<text x="2377" y="1020.2" font-size="11.200" fill="#2e2e2e" font-family="Liberation Sans,sans-serif">C. Over 100</text>
<circle cx="2358.5" cy="1014.6" r="1.2" fill="#111"/>
<circle cx="2352.5" cy="1016.6" r="1.2" fill="#111"/>
<circle cx="2346.5" cy="1018.6" r="1.2" fill="#111"/>
<text x="2377" y="1036.6" font-size="11.200" fill="#2e2e2e" font-family="Liberation Sans,sans-serif">D. I don’t get anxious</text>
<circle cx="2358.5" cy="1031" r="1.2" fill="#111"/>
<circle cx="2352.5" cy="1033" r="1.2" fill="#111"/>
<circle cx="2346.5" cy="1035" r="1.2" fill="#111"/>
<circle cx="2340.5" cy="1037" r="1.2" fill="#111"/>
<text x="2377" y="1084.6" font-size="11.200" font-weight="bold" fill="#1a1a1a" font-family="Liberation Sans,sans-serif">My workspace is:</text>
<text x="2377" y="1101" font-size="11.200" fill="#2e2e2e" font-family="Liberation Sans,sans-serif">A. Minimalist</text>
<circle cx="2358.5" cy="1097.4" r="2.8" fill="#d3d2d0"/>
<text x="2377" y="1117.4" font-size="11.200" fill="#2e2e2e" font-family="Liberation Sans,sans-serif">B. Covered in photos/art</text>
<circle cx="2358.5" cy="1113.8" r="2.8" fill="#f3e2d0"/>
<text x="2377" y="1133.8" font-size="11.200" fill="#2e2e2e" font-family="Liberation Sans,sans-serif">C. Covered in papers</text>
<circle cx="2358.5" cy="1130.2" r="2.8" fill="#efe7a8"/>
<text x="2377" y="1150.2" font-size="11.200" fill="#2e2e2e" font-family="Liberation Sans,sans-serif">D. Preferably a hammock</text>
<circle cx="2358.5" cy="1146.6" r="2.8" fill="#dfe0e2"/>
<text x="2377" y="1199" font-size="11.200" font-weight="bold" fill="#1a1a1a" font-family="Liberation Sans,sans-serif">The future is</text>
<text x="2377" y="1215.4" font-size="11.200" fill="#2e2e2e" font-family="Liberation Sans,sans-serif">A. bright</text>
<path d="M2348.5 1204.8l8 -3l4 3l6 -2l3 10l-7 7l-10 -3l-5 -6z" fill="#111"/>
<text x="2377" y="1231.8" font-size="11.200" fill="#2e2e2e" font-family="Liberation Sans,sans-serif">B. Grim</text>
<path d="M2351.5 1222.2q6 2 8 10" stroke="#111" stroke-width="1.5" fill="none"/>
</g>
</svg>
</div>
<div id="vscroll" class="a"><svg style="left:9px;top:12px" width="16" height="10" viewBox="0 0 16 10"><path d="M1.500 8L8 1.500L14.500 8" stroke="#a8a8a8" stroke-width="1.800" fill="none"/></svg>
<div class="a" style="left:2.500px;top:775.500px;width:29px;height:50.500px;border-radius:14.500px;background:#5e5e5e"></div>
<svg style="left:9px;top:1582px" width="16" height="10" viewBox="0 0 16 10"><path d="M1.500 1.500L8 8L14.500 1.500" stroke="#a8a8a8" stroke-width="1.800" fill="none"/></svg>
</div>
<div id="status" class="a"><div class="a" style="left:11px;top:11px;width:28px;height:28px;border-radius:50%;background:#d0d0d0;color:#505050;font-size:23px;font-weight:bold;line-height:28px;text-align:center">?</div>
<div class="a" style="left:60px;top:6px;font-size:22px;line-height:36px;color:#e2e2e2;white-space:nowrap">选择<span style="margin-left:14px">“</span>问号<span style="margin-right:14px">”</span>图标可了解如何使用该工具。</div>
</div>
<div id="bottombar" class="a"><div class="inp" style="left:8px;top:0.500px;width:138px;height:40px;font-size:25px;line-height:41px;padding-left:10px">40.01%</div>
<div class="a" style="left:110px;top:2px;width:34.500px;height:37px;background:#505050;border-left:1.500px solid #626262"></div>
<svg style="left:119px;top:15.500px" width="16" height="10" viewBox="0 0 16 10"><path d="M1.500 1.500L8 8L14.500 1.500" stroke="#f0f0f0" stroke-width="2" fill="none"/></svg>
<div class="inp" style="left:154px;top:0.500px;width:138px;height:40px;font-size:25px;line-height:41px;padding-left:7px">0°</div>
<div class="a" style="left:256px;top:2px;width:34.500px;height:37px;background:#505050;border-left:1.500px solid #626262"></div>
<svg style="left:265px;top:15.500px" width="16" height="10" viewBox="0 0 16 10"><path d="M1.500 1.500L8 8L14.500 1.500" stroke="#f0f0f0" stroke-width="2" fill="none"/></svg>
<svg style="left:305px;top:7.500px" width="60" height="20" viewBox="0 0 60 20"><g fill="#686868"><rect x="3" y="2" width="3" height="18"/><path d="M19 2V20L7 11Z"/><path d="M51 2V20L39 11Z"/></g></svg>
<div class="inp" style="left:374px;top:0.500px;width:118px;height:40px;font-size:25px;line-height:41px;padding-left:9px">1</div>
<div class="a" style="left:455px;top:2px;width:35.500px;height:37px;background:#505050;border-left:1.500px solid #626262"></div>
<svg style="left:465px;top:15.500px" width="16" height="10" viewBox="0 0 16 10"><path d="M1.500 1.500L8 8L14.500 1.500" stroke="#f0f0f0" stroke-width="2" fill="none"/></svg>
<svg style="left:508px;top:7.500px" width="60" height="20" viewBox="0 0 60 20"><g fill="#686868"><path d="M3 2V20L15 11Z"/><path d="M35 2V20L47 11Z"/><rect x="48" y="2" width="3" height="18"/></g></svg>
<div class="a" style="left:574px;top:2px;width:2px;height:30px;background:#474747"></div>
<div class="a" style="left:697px;top:1px;font-size:26px;line-height:36px;color:#dcdcdc;white-space:nowrap">切换直接选择</div>
<svg style="left:988px;top:6px" width="12" height="20" viewBox="0 0 12 20"><path d="M1 0V20L11 10Z" fill="#d8d8d8"/></svg>
<div class="a" style="left:1010px;top:0;width:1473px;height:23px;background:#474747"></div>
<svg style="left:1022px;top:7px" width="10" height="16" viewBox="0 0 10 16"><path d="M8 1.500L1.500 8L8 14.500" stroke="#a8a8a8" stroke-width="1.800" fill="none"/></svg>
<svg style="left:2461px;top:7px" width="10" height="16" viewBox="0 0 10 16"><path d="M2 1.500L8.500 8L2 14.500" stroke="#a8a8a8" stroke-width="1.800" fill="none"/></svg>
<div class="a" style="left:1743px;top:2.500px;width:50px;height:31px;border-radius:15px;background:#5e5e5e"></div>

<div class="a" style="left:973px;top:0;width:1.500px;height:19px;background:#474747"></div></div>
<div id="vdiv" class="a"></div>
<div id="rpanel" class="a"><div class="pg">
<div class="a" style="left:2520px;top:66px;width:503px;height:24px;background:#424242"></div>
<svg style="left:2994px;top:73px" width="16" height="10" viewBox="0 0 16 10"><path d="M1 1L5 5L1 9M9 1L13 5L9 9" stroke="#d0d0d0" stroke-width="1.700" fill="none"/></svg>
<div class="a" style="left:2520px;top:90px;width:503px;height:54px;background:#424242;border-top:2px solid #383838;line-height:50px"></div>
<div class="ptab" style="left:2520px;width:58px;padding-left:19px;border-top:2px solid #383838;line-height:50px">Retype</div>
<div class="ptab" style="left:2578px;width:57px;padding-left:17px;border-top:2px solid #383838;line-height:50px">库</div>
<div class="ptab" style="left:2635px;width:78px;padding-left:16px;background:#535353;color:#f4f4f4;font-weight:500;border-right:2px solid #3d3d3d">属性</div>
<div class="ptab" style="left:2713px;width:56px;padding-left:17px;border-top:2px solid #383838;line-height:50px">画笔</div>
<div class="ptab" style="left:2769px;width:56px;padding-left:16px;border-top:2px solid #383838;line-height:50px">透明</div>
<div class="ptab" style="left:2825px;width:56px;padding-left:16px;border-top:2px solid #383838;line-height:50px">外观</div>
<div class="ptab" style="left:2881px;width:63px;padding-left:17px;border-top:2px solid #383838;line-height:50px">色板</div>

<div class="t" style="left:2542px;top:162px">编组</div>
<div class="sep" style="top:209.500px"></div>
<div class="t" style="left:2542px;top:229px">变换</div>
<!-- ref point -->
<svg style="left:2541px;top:301px" width="38" height="38" viewBox="0 0 38 38"><g fill="none" stroke="#d0d0d0" stroke-width="1.600"><path d="M8 4H15M23 4H30M8 19H15M23 19H30M8 34H15M23 34H30M4 8V15M4 23V30M19 8V15M19 23V30M34 8V15M34 23V30"/><rect x="0.800" y="0.800" width="7" height="7"/><rect x="15.500" y="0.800" width="7" height="7"/><rect x="30.200" y="0.800" width="7" height="7"/><rect x="0.800" y="15.500" width="7" height="7"/><rect x="30.200" y="15.500" width="7" height="7"/><rect x="0.800" y="30.200" width="7" height="7"/><rect x="15.500" y="30.200" width="7" height="7"/><rect x="30.200" y="30.200" width="7" height="7"/></g><rect x="14.700" y="14.700" width="8.600" height="8.600" fill="#fff"/></svg>
<div class="t" style="left:2601px;top:275px">X:</div>
<div class="inp" style="left:2632px;top:274px;width:110px;height:40px;padding-left:9px">52.158 r</div>
<div class="t" style="left:2773px;top:276px">宽:</div>
<div class="inp" style="left:2814px;top:274px;width:109px;height:40px;padding-left:9px">93.846 r</div>
<div class="t" style="left:2601px;top:327px">Y:</div>
<div class="inp" style="left:2632px;top:326px;width:110px;height:40px;padding-left:8px;letter-spacing:1px">-140.834</div>
<div class="t" style="left:2773px;top:328px">高:</div>
<div class="inp" style="left:2814px;top:326px;width:109px;height:40px;padding-left:9px">95.066 r</div>
<div class="a" style="left:2944px;top:297px;width:47px;height:48px;background:#2c2c2c;border-radius:4px"></div>
<svg style="left:2958px;top:307px" width="18" height="30" viewBox="0 0 18 30"><g fill="none" stroke="#f4f4f4" stroke-width="3" stroke-linecap="round"><path d="M3.500 11V8.500a5.500 5.500 0 0 1 11 0V14a5.500 5.500 0 0 1 -5.500 5.500"/><path d="M14.500 18V21.500a5.500 5.500 0 0 1 -11 0V16a5.500 5.500 0 0 1 5.500 -5.500"/></g></svg>
<!-- angle -->
<svg style="left:2591px;top:383px" width="32" height="24" viewBox="0 0 32 24"><path d="M0.500 17.800H22" fill="none" stroke="#d0d0d0" stroke-width="2.400"/><path d="M1.500 17L16.500 1.500" fill="none" stroke="#d0d0d0" stroke-width="1.800"/><path d="M11.500 7Q17.500 10.500 18.500 17" fill="none" stroke="#d0d0d0" stroke-width="1.600"/><circle cx="28" cy="9.500" r="1.600" fill="#d0d0d0"/><circle cx="28" cy="17" r="1.600" fill="#d0d0d0"/></svg>
<div class="inp" style="left:2639px;top:378px;width:109px;height:40px;padding-left:6px;font-size:27px">0°</div>
<div class="a" style="left:2712px;top:379px;width:2px;height:38px;background:#626262"></div>
<div class="a" style="left:2714px;top:379.500px;width:32.500px;height:37px;background:#505050;border-radius:0 3px 3px 0"></div>
<svg style="left:2721px;top:393px" width="16" height="10" viewBox="0 0 16 10"><path d="M1.500 1.500L8 8L14.500 1.500" stroke="#f0f0f0" stroke-width="2" fill="none"/></svg>
<svg style="left:2833px;top:388px" width="28" height="24" viewBox="0 0 28 24"><path d="M1.500 4.500L9.500 12L1.500 19.500Z" fill="none" stroke="#d0d0d0" stroke-width="1.800"/><path d="M26.500 4.500L18.500 12L26.500 19.500Z" fill="#d0d0d0"/><path d="M14 0V24" stroke="#d0d0d0" stroke-width="1.600" stroke-dasharray="2 2"/></svg>
<svg style="left:2883px;top:386px" width="24" height="28" viewBox="0 0 24 28"><path d="M4.500 1.500L12 9.500L19.500 1.500Z" fill="#d0d0d0"/><path d="M4.500 26.500L12 18.500L19.500 26.500Z" fill="none" stroke="#d0d0d0" stroke-width="1.800"/><path d="M0 14H24" stroke="#d0d0d0" stroke-width="1.600" stroke-dasharray="2 2"/></svg>
<div class="a dots" style="left:2956px;top:437px"><i style="left:0"></i><i style="left:10px"></i><i style="left:20px"></i></div>

<div class="sep" style="top:460px"></div>
<div class="t" style="left:2542px;top:478px">外观</div>
<div class="a" style="left:2541px;top:532px;width:36px;height:36px;border:2px solid #2a2a2a;background:#535353;color:#f0f0f0;font-size:25px;line-height:31px;text-align:center">?</div>
<div class="t" style="left:2601px;top:534px">填色</div>
<svg style="left:2541px;top:590px" width="36" height="36" viewBox="0 0 36 36"><rect x="1" y="1" width="34" height="34" fill="#535353" stroke="#2a2a2a" stroke-width="2"/><rect x="10.500" y="10.500" width="15" height="15" fill="#535353" stroke="#2a2a2a" stroke-width="3"/><g font-size="11" font-weight="bold" fill="#e8e8e8" font-family="Liberation Sans,sans-serif" text-anchor="middle"><text x="7" y="12">?</text><text x="30" y="12">?</text><text x="7" y="33">?</text><text x="30" y="33">?</text></g></svg>
<div class="t w ul" style="left:2601px;top:592px">描边</div>
<div class="inp" style="left:2724px;top:588px;width:138px;height:41px"></div>
<div class="a" style="left:2725.500px;top:589.500px;width:34px;height:38px;background:#505050;border-right:1.500px solid #626262;border-radius:3px 0 0 3px"></div>
<div class="a" style="left:2825px;top:589.500px;width:35.500px;height:38px;background:#505050;border-left:1.500px solid #626262;border-radius:0 3px 3px 0"></div>
<svg style="left:2734px;top:594px" width="18" height="30" viewBox="0 0 18 30"><path d="M2 9.500L9 2.500L16 9.500M2 20.500L9 27.500L16 20.500" stroke="#f0f0f0" stroke-width="2" fill="none"/></svg>
<svg style="left:2835px;top:603px" width="16" height="10" viewBox="0 0 16 10"><path d="M1.500 1.500L8 8L14.500 1.500" stroke="#f0f0f0" stroke-width="2" fill="none"/></svg>
<svg style="left:2543px;top:650px" width="32" height="32" viewBox="0 0 32 32"><rect x="1" y="1" width="30" height="30" fill="#6a6a6a" stroke="#c8c8c8" stroke-width="2"/><g fill="#848484"><rect x="2" y="2" width="7" height="7"/><rect x="16" y="2" width="7" height="7"/><rect x="9" y="9" width="7" height="7"/><rect x="23" y="9" width="7" height="7"/><rect x="2" y="16" width="7" height="7"/><rect x="16" y="16" width="7" height="7"/><rect x="9" y="23" width="7" height="7"/><rect x="23" y="23" width="7" height="7"/></g></svg>
<div class="t w ul" style="left:2601px;top:650px">不透明度</div>
<div class="inp" style="left:2724px;top:646px;width:138px;height:41px;padding-left:8px;line-height:38px">100%</div>
<div class="a" style="left:2825px;top:647.500px;width:35.500px;height:38px;background:#505050;border-left:1.500px solid #626262;border-radius:0 3px 3px 0"></div>
<svg style="left:2837px;top:657px" width="12" height="18" viewBox="0 0 12 18"><path d="M2 1.500L9.500 9L2 16.500" stroke="#f0f0f0" stroke-width="2" fill="none"/></svg>
<div class="t" style="left:2534px;top:716px;font-style:italic;font-size:27px;color:#d2d2d2">fx</div>
<svg style="left:2558px;top:744px" width="6" height="4" viewBox="0 0 6 4"><path d="M0 0H6L3 4Z" fill="#d0d0d0"/></svg>
<div class="a dots" style="left:2944px;top:781px"><i style="left:0"></i><i style="left:10px"></i><i style="left:20px"></i></div>

<div class="sep" style="top:805px"></div>
<div class="t" style="left:2542px;top:830px">画笔</div>
<div class="a" style="left:2623px;top:828px;width:218px;height:40px;background:#454545;border:1.500px solid #626262;border-radius:4px"></div>
<div class="a" style="left:2623px;top:828.500px;width:180px;height:38.500px;background:#e3e3e3;color:#111;font-size:23px;line-height:36px;padding-left:46px;white-space:nowrap">5 点圆形</div>
<div class="a" style="left:2637px;top:843px;width:10px;height:10px;border-radius:50%;background:#000"></div>
<svg style="left:2814px;top:843px" width="16" height="10" viewBox="0 0 16 10"><path d="M1.500 1.500L8 8L14.500 1.500" stroke="#f0f0f0" stroke-width="2" fill="none"/></svg>
<svg style="left:2867px;top:836px" width="22" height="23" viewBox="0 0 22 23"><rect x="1" y="2" width="20" height="20" fill="none" stroke="#d0d0d0" stroke-width="2"/><rect x="0" y="0" width="22" height="4" fill="#d0d0d0"/><path d="M4 9H6.500M9 9H18M4 13.500H6.500M9 13.500H18M4 18H6.500M9 18H18" stroke="#d0d0d0" stroke-width="2"/></svg>
<svg style="left:2924px;top:836px" width="32" height="24" viewBox="0 0 32 24"><path d="M2.500 1V20M9 1V20M13 2L20.500 20" stroke="#d0d0d0" stroke-width="3.600" fill="none"/><path d="M25 19H31L28 23Z" fill="#d0d0d0"/></svg>

<div class="sep" style="top:903px"></div>
<div class="t" style="left:2542px;top:922px">对齐</div>
<svg style="left:2520px;top:975px" width="503" height="50" viewBox="2520 975 503 50"><g fill="#cbcbcb" stroke="none">
<path d="M2555.500 982V990M2547 990H2553" stroke="#cbcbcb" stroke-width="1.600" fill="none"/><path d="M2554 990H2569L2576.500 997.500V1012H2554Z" fill="#727272" stroke="#cbcbcb" stroke-width="1.800"/><path d="M2569 990V997.500H2576.500Z"/><path d="M2582 995L2588.500 1001.500L2595 995" stroke="#cbcbcb" stroke-width="1.800" fill="none"/>
<rect x="2622.500" y="981" width="2" height="37"/><rect x="2628" y="986" width="15" height="10"/><rect x="2628" y="1001" width="25" height="10"/>
<rect x="2697" y="981" width="2" height="37"/><rect x="2689" y="986" width="18" height="10"/><rect x="2684.500" y="1001" width="27" height="10"/>
<rect x="2773" y="981" width="2" height="37"/><rect x="2754" y="986" width="16" height="10"/><rect x="2744.500" y="1001" width="25.500" height="10"/>
<rect x="2801" y="982.500" width="36" height="2"/><rect x="2806.500" y="988" width="10" height="25"/><rect x="2821.500" y="988" width="11" height="15"/>
<rect x="2861" y="997.500" width="36" height="2"/><rect x="2867" y="985" width="10" height="26"/><rect x="2882" y="989" width="11" height="18"/>
<rect x="2921" y="1014.500" width="36" height="2"/><rect x="2927" y="985" width="10" height="27"/><rect x="2941.500" y="996" width="11" height="16"/>
</g></svg>
<div class="a dots" style="left:2956px;top:1047.500px"><i style="left:0"></i><i style="left:10px"></i><i style="left:20px"></i></div>

<div class="sep" style="top:1070px"></div>
<div class="t" style="left:2542px;top:1089px">路径查找器</div>
<svg style="left:2520px;top:1145px" width="503" height="40" viewBox="2520 1145 503 40"><g fill="#cbcbcb">
<path d="M2553 1150.500H2573V1159H2581V1179H2561V1170.500H2553Z"/>
<rect x="2615" y="1150.500" width="20" height="20"/><rect x="2624" y="1160" width="18.500" height="18" fill="#535353" stroke="#cbcbcb" stroke-width="2"/>
<rect x="2677.500" y="1151.500" width="18" height="18" fill="none" stroke="#cbcbcb" stroke-width="2"/><rect x="2686.500" y="1160.500" width="18" height="18" fill="none" stroke="#cbcbcb" stroke-width="2"/><rect x="2687.500" y="1161.500" width="7" height="7"/>
<path d="M2739 1150.500H2759V1159H2767V1179H2747V1170.500H2739Z"/><rect x="2747" y="1159" width="12" height="11.500" fill="#535353"/>
</g></svg>
<div class="a" style="left:2900px;top:1131px;width:90px;height:40px;background:#5a5a5a;border-radius:4px;color:#7c7c7c;font-size:25px;line-height:38px;text-align:center">扩展</div>
<div class="a dots" style="left:2956px;top:1191.500px"><i style="left:0"></i><i style="left:10px"></i><i style="left:20px"></i></div>

<div class="sep" style="top:1217px"></div>
<div class="t" style="left:2542px;top:1247px">快速操作</div>
<div class="btn" style="left:2541.500px;top:1297.500px;width:216.500px;height:40.500px">偏移路径</div>
<div class="btn" style="left:2778px;top:1297.500px;width:216.500px;height:40.500px">取消编组</div>
<div class="btn" style="left:2541.500px;top:1360px;width:453px;height:40.500px">重新着色</div>
<div class="btn" style="left:2541.500px;top:1421.500px;width:408px;height:40.500px">启动全局编辑</div>
<div class="btn" style="left:2952.500px;top:1421.500px;width:42px;height:40.500px;background:#404040"></div>
<svg style="left:2965px;top:1437px" width="16" height="10" viewBox="0 0 16 10"><path d="M1.500 1.500L8 8L14.500 1.500" stroke="#d8d8d8" stroke-width="1.800" fill="none"/></svg>
<div class="btn" style="left:2541.500px;top:1484px;width:453px;height:40.500px">生成式形状填充 (Beta)</div>
</div>
</div>
<div class="a" style="left:0;top:417px;width:143px;height:845px;background:#535353;border-radius:0 9px 0 0;box-shadow:3px 3px 6px rgba(0,0,0,.45);border-right:2px solid #444;border-top:1px solid #4a4a4a"></div>
<div class="a" style="left:0;top:418px;width:141px;height:26px;background:#424242;border-radius:0 8px 0 0;border-bottom:2px solid #383838"></div>
<svg style="left:0;top:0" width="150" height="1749" viewBox="0 0 150 1749">
<g fill="#cbcbcb" stroke="none">
<!-- header -->
<path d="M11.500 427.500L22.500 438.500M22.500 427.500L11.500 438.500" stroke="#d6d6d6" stroke-width="2.200" fill="none"/>
<path d="M119.500 427.500L115 432.500L119.500 437.500M127 427.500L122.500 432.500L127 437.500" stroke="#d6d6d6" stroke-width="1.800" fill="none"/>
<g fill="#3a3a3a"><rect x="51" y="450.500" width="1.600" height="8.500"/><rect x="55" y="450.500" width="1.600" height="8.500"/><rect x="59" y="450.500" width="1.600" height="8.500"/><rect x="63" y="450.500" width="1.600" height="8.500"/><rect x="67" y="450.500" width="1.600" height="8.500"/><rect x="71" y="450.500" width="1.600" height="8.500"/><rect x="75" y="450.500" width="1.600" height="8.500"/><rect x="79" y="450.500" width="1.600" height="8.500"/><rect x="83" y="450.500" width="1.600" height="8.500"/><rect x="87" y="450.500" width="1.600" height="8.500"/></g>
<!-- row1 -->
<rect x="13.500" y="485" width="55" height="44" rx="4" fill="#2e2e2e"/>
<path d="M31.500 492.500L31.500 524L40 514.600L53.500 514Z" fill="none" stroke="#e4e4e4" stroke-width="2"/>
<path d="M91 491L91 525.500L100.300 515.200L115.500 514.500Z"/>
<path d="M120.400 527L127.600 527L127.600 520Z"/>
<!-- rows 2-4 (zoom coords origin 0,530 scale 1/9.72) -->
<g transform="translate(0 530) scale(0.102881)">
 <g id="pen"><path d="M245 372L312 200L402 150L492 240L440 332L272 405Z"/><path d="M418 128L462 88L548 180L502 226Z"/><path d="M262 388L345 295" stroke="#535353" stroke-width="13"/><circle cx="345" cy="293" r="14" fill="#535353"/></g>
 <path d="M585 435L650 435L650 370Z"/>
 <g transform="translate(622 0)"><path d="M245 372L312 200L402 150L492 240L440 332L272 405Z"/><path d="M418 128L462 88L548 180L502 226Z"/><path d="M262 388L345 295" stroke="#535353" stroke-width="13"/><circle cx="345" cy="293" r="14" fill="#535353"/></g>
 <path d="M812 112Q862 150 832 235Q778 330 818 378Q845 402 872 384" fill="none" stroke="#cbcbcb" stroke-width="14" stroke-linecap="round"/>
 <rect x="251" y="578" width="293" height="261" fill="#6c6c6c" stroke="#d2d2d2" stroke-width="12"/>
 <path d="M585 905L650 905L650 840Z"/>
 <path d="M940 712L1108 556Q1140 545 1146 565L1140 602L996 764Z"/><path d="M962 745Q1002 782 966 832Q922 872 822 852Q872 812 882 772Q912 735 962 745Z"/>
 <path d="M1170 905L1235 905L1235 840Z"/>
 <path d="M262 1042H540V1115H510V1082H425V1280H460V1310H340V1280H380V1082H292V1115H262Z"/>
 <path d="M585 1370L650 1370L650 1305Z"/>
 <path d="M1125 1215A145 145 0 0 0 905 1060" fill="none" stroke="#cbcbcb" stroke-width="30"/>
 <path d="M832 1040L838 1148L945 1105Z"/>
 <g><circle cx="850" cy="1240" r="12"/><circle cx="880" cy="1278" r="12"/><circle cx="920" cy="1308" r="12"/><circle cx="968" cy="1322" r="12"/><circle cx="1020" cy="1315" r="12"/><circle cx="1065" cy="1295" r="12"/><circle cx="1100" cy="1258" r="12"/></g>
 <path d="M1170 1370L1235 1370L1235 1305Z"/>
</g>
<!-- rows 5-7 (origin 0,670) -->
<g transform="translate(0 670) scale(0.102881)">
 <path d="M430 112L568 250L440 385L300 245Z"/>
 <path d="M300 278L395 372L340 432L247 336Z" fill="none" stroke="#cbcbcb" stroke-width="17" stroke-linejoin="round"/>
 <path d="M585 475L650 475L650 410Z"/>
 <circle cx="890" cy="255" r="75" fill="none" stroke="#cbcbcb" stroke-width="16"/>
 <path d="M935 155A112 112 0 1 1 925 350" fill="none" stroke="#cbcbcb" stroke-width="16"/>
 <circle cx="855" cy="255" r="9"/><circle cx="895" cy="255" r="9"/><circle cx="935" cy="255" r="9"/><circle cx="975" cy="255" r="9"/><circle cx="1015" cy="255" r="9"/>
 <path d="M1040 240L1040 445L1098 378L1192 372Z" stroke="#535353" stroke-width="6"/>
 <defs><linearGradient id="tg" x1="0" x2="1" y1="0" y2="0"><stop offset="0" stop-color="#262626"/><stop offset="1" stop-color="#d6d6d6"/></linearGradient></defs>
 <rect x="251" y="618" width="293" height="261" fill="url(#tg)" stroke="#d2d2d2" stroke-width="12"/>
 <path d="M585 940L650 940L650 875Z"/>
 <path d="M825 815L920 905M1040 595L1140 690" stroke="#cbcbcb" stroke-width="16" fill="none"/>
 <path d="M905 805L1060 675" stroke="#cbcbcb" stroke-width="30" fill="none"/>
 <path d="M1085 650L1075 720L1015 660Z"/><path d="M880 830L890 760L950 820Z"/>
 <path d="M900 718L955 672L975 695L920 740Z"/>
 <path d="M262 1345L455 1150" stroke="#cbcbcb" stroke-width="66" stroke-linecap="round" fill="none"/>
 <path d="M268 1339L455 1150" stroke="#535353" stroke-width="34" stroke-linecap="round" fill="none"/>
 <path d="M400 1115L505 1220" stroke="#cbcbcb" stroke-width="44" fill="none"/>
 <path d="M470 1140L520 1090" stroke="#cbcbcb" stroke-width="74" stroke-linecap="round" fill="none"/>
 <path d="M850 1105Q880 1060 925 1100Q960 1160 940 1200Q1000 1230 1060 1190Q1110 1140 1150 1170Q1180 1210 1150 1280Q1140 1230 1110 1220Q1060 1300 960 1310Q880 1300 900 1230Q910 1170 870 1140Q860 1120 850 1105Z"/>
 <path d="M1030 1115L835 1320" stroke="#cbcbcb" stroke-width="13" fill="none"/>
 <circle cx="1030" cy="1115" r="20" fill="#535353" stroke="#cbcbcb" stroke-width="13"/><circle cx="835" cy="1322" r="20" fill="#535353" stroke="#cbcbcb" stroke-width="13"/><circle cx="930" cy="1220" r="22" fill="#535353" stroke="#cbcbcb" stroke-width="10"/>
</g>
<!-- rows 8-9 (origin 0,810) -->
<g transform="translate(0 810) scale(0.102881)">
 <rect x="222" y="185" width="158" height="155"/>
 <rect x="322" y="240" width="148" height="150" rx="60" fill="#8c8c8c" stroke="#d2d2d2" stroke-width="13"/>
 <circle cx="495" cy="380" r="72" fill="#535353" stroke="#dadada" stroke-width="15"/>
 <path d="M895 145V250M790 250H870" stroke="#d2d2d2" stroke-width="14" fill="none"/>
 <path d="M890 250H1050L1115 315V455H890Z" fill="#6c6c6c" stroke="#d2d2d2" stroke-width="12"/>
 <path d="M1050 250V315H1115Z"/>
 <path d="M250 625Q325 790 250 955" fill="none" stroke="#cbcbcb" stroke-width="15" stroke-linecap="round"/>
 <path d="M312 668L468 655L478 740L322 760Z"/><path d="M318 810L555 840L545 930L310 905Z"/>
 <circle cx="945" cy="748" r="110" fill="none" stroke="#d2d2d2" stroke-width="19"/>
 <path d="M1032 838L1112 922" stroke="#d2d2d2" stroke-width="34" stroke-linecap="round" fill="none"/>
 <path d="M1170 985L1235 985L1235 920Z"/>
 <path d="M1000 1230Q1090 1200 1130 1290L1165 1280L1140 1390L1060 1340L1095 1320Q1070 1260 1015 1270Z M1040 1185L975 1240L1050 1290Z" fill="#6d6d6d"/>
</g>
</g>
<rect x="9" y="918" width="119" height="1.500" fill="#4a4a4a"/><rect x="9" y="919.500" width="119" height="1" fill="#5c5c5c"/>
<!-- fill/stroke -->
<rect x="47.500" y="965.500" width="71" height="71" fill="#535353" stroke="#2c2c2c" stroke-width="2"/>
<rect x="65.500" y="983.500" width="35" height="35" fill="#535353" stroke="#2c2c2c" stroke-width="2"/>
<rect x="11.500" y="930" width="71" height="70.500" fill="#535353" stroke="#2c2c2c" stroke-width="2"/>
<text x="47" y="974" font-size="29" fill="#f0f0f0" text-anchor="middle" font-family="Liberation Sans,sans-serif">?</text>
<g font-size="14" font-weight="bold" fill="#e4e4e4" text-anchor="middle" font-family="Liberation Sans,sans-serif"><text x="110" y="982">?</text><text x="57" y="1032">?</text><text x="110" y="1032">?</text></g>
<!-- default fill stroke -->
<rect x="21" y="1020" width="13" height="13" fill="#111" stroke="#e8e8e8" stroke-width="1.500"/><rect x="25" y="1024" width="5" height="5" fill="#535353"/>
<rect x="12.500" y="1011.500" width="13.500" height="13.500" fill="#fff" stroke="#111" stroke-width="2"/><rect x="11" y="1010" width="16.500" height="16.500" fill="none" stroke="#e8e8e8" stroke-width="1"/>
<!-- color row -->
<rect x="11.500" y="1051.500" width="115.500" height="37" fill="#585858" stroke="#5f5f5f" stroke-width="1"/>
<rect x="90.500" y="1051" width="37" height="38" fill="#383838"/>
<path d="M48.500 1052V1088" stroke="#4c4c4c" stroke-width="1"/>
<rect x="17.500" y="1057.500" width="25" height="25" fill="#fff" stroke="#111" stroke-width="1.800"/>
<defs><linearGradient id="tg2" x1="0" x2="1"><stop offset="0" stop-color="#fff"/><stop offset="1" stop-color="#2a2a2a"/></linearGradient></defs>
<rect x="57.500" y="1057.500" width="25" height="25" fill="url(#tg2)" stroke="#111" stroke-width="1.800"/>
<rect x="97.500" y="1057.500" width="25" height="25" fill="#fff" stroke="#111" stroke-width="1.800"/>
<path d="M98.800 1081.200L121.200 1058.800" stroke="#f41010" stroke-width="4.600"/>
<!-- draw modes -->
<rect x="12.500" y="1100" width="115.500" height="36" fill="#585858" stroke="#606060" stroke-width="1"/>
<rect x="13" y="1100.500" width="35.500" height="35" fill="#333333"/>
<path d="M48.500 1100V1136M89 1100V1136" stroke="#4c4c4c" stroke-width="1"/>
<circle cx="29" cy="1116" r="7.500" fill="#8a8a8a" stroke="#d2d2d2" stroke-width="2"/><rect x="30" y="1118" width="10.500" height="10.500" fill="#d2d2d2"/>
<circle cx="69" cy="1116" r="7.500" fill="#8a8a8a" stroke="#c8c8c8" stroke-width="2"/><rect x="70" y="1118" width="10.500" height="10.500" fill="#c8c8c8"/>
<circle cx="109" cy="1117" r="7" fill="none" stroke="#6c6c6c" stroke-width="2"/><circle cx="109" cy="1117" r="3" fill="#6c6c6c"/>
<!-- screen mode -->
<rect x="50" y="1162" width="26" height="22" fill="#6c6c6c" stroke="#d2d2d2" stroke-width="2"/><rect x="49" y="1161" width="28" height="5" fill="#d2d2d2"/>
<rect x="66.500" y="1154" width="26" height="22" fill="#6c6c6c" stroke="#d2d2d2" stroke-width="2"/><rect x="65.500" y="1153" width="28" height="5" fill="#d2d2d2"/>
<circle cx="60" cy="1232.500" r="3.600" fill="#cbcbcb"/><circle cx="71" cy="1232.500" r="3.600" fill="#cbcbcb"/><circle cx="81.500" cy="1232.500" r="3.600" fill="#cbcbcb"/>
</svg>

<div class="a" id="ledge" style="left:0;top:5px;width:3px;height:1744px;background:linear-gradient(90deg,#363636 0,#363636 1px,#595959 1px,#595959 3px)"></div>
<div class="a" style="left:3019.500px;top:7px;width:3.500px;height:1742px;background:linear-gradient(90deg,#5b5b5b 0,#5b5b5b 1.200px,#343434 1.200px)"></div>
<div class="a" style="left:0;top:0;width:6px;height:6px;background:radial-gradient(circle at 100% 100%,rgba(0,0,0,0) 4px,#353535 4.500px,#353535 5.600px,#a0a0a0 6px)"></div>
<div class="a" style="left:3016px;top:0;width:7px;height:7px;background:radial-gradient(circle at 0 100%,rgba(0,0,0,0) 3.500px,#343434 4.500px,#343434 6px,#dcdcdc 7px)"></div>

<div class="a" style="left:1601px;top:1607px;width:878px;height:72px;background:#535353;border:2px solid #3a3a3a;border-radius:8px"></div>
<div class="a" style="left:1613px;top:1617px;width:8px;height:52px;border-radius:4px;background:#9c9c9c"></div>
<div class="btn" style="left:1641px;top:1616px;width:346px;height:54px;line-height:53px;text-align:left;padding-left:62px;font-size:26px;font-weight:400;border:2px solid #696969">生成式形状填充 (Beta)</div>
<div class="btn" style="left:1995px;top:1616px;width:184px;height:54px;line-height:53px;text-align:left;padding-left:62px;font-size:26px;font-weight:400;border:2px solid #696969">取消编组</div>
<svg style="left:0;top:0" width="3023" height="1749" viewBox="0 0 3023 1749">
<g fill="none" stroke="#d0d0d0" stroke-width="2">
<!-- gen fill icon -->
<rect x="1662.500" y="1632.500" width="25" height="25"/><circle cx="1662.500" cy="1632.500" r="3" fill="#535353"/><circle cx="1662.500" cy="1657.500" r="3" fill="#535353"/><circle cx="1688" cy="1657.500" r="3" fill="#535353"/>
<path d="M1667 1653V1640L1672 1646L1677 1642L1683 1653Z" fill="#d0d0d0" stroke="none"/>
<path d="M1685 1626l1.800 4.500l4.500 1.800l-4.500 1.800l-1.800 4.500l-1.800 -4.500l-4.500 -1.800l4.500 -1.800z" fill="#d0d0d0" stroke="none"/>
<path d="M1675 1637l1.200 3l3 1.200l-3 1.200l-1.200 3l-1.200 -3l-3 -1.200l3 -1.200z" fill="#d0d0d0" stroke="none"/>
<!-- ungroup icon -->
<rect x="2016" y="1628" width="30" height="30" stroke="#8a8a8a"/><rect x="2020" y="1632" width="11" height="11" fill="#b8b8b8" stroke="none"/><rect x="2022" y="1646" width="12" height="12" fill="#b8b8b8" stroke="none"/><rect x="2034" y="1640" width="10" height="16" fill="#b8b8b8" stroke="none"/>
<path d="M2015 1627L2047 1659" stroke="#d8d8d8" stroke-width="2.500"/>
<!-- isolate icon -->
<rect x="2204" y="1637" width="13" height="11"/><path d="M2197 1630L2202 1635M2224 1630L2219 1635M2197 1655L2202 1650M2224 1655L2219 1650" stroke-width="2.200"/>
<path d="M2203 1631v5h-5zM2218 1631v5h5zM2203 1654v-5h-5zM2218 1654v-5h5z" fill="#d0d0d0" stroke="none"/>
<!-- recolor wheel -->
<circle cx="2269" cy="1643" r="15" fill="#8a8a8a" stroke="#d8d8d8" stroke-width="2.500"/>
<path d="M2269 1643L2269 1628A15 15 0 0 1 2282 1635.500Z" fill="#e0e0e0" stroke="none"/><path d="M2269 1643L2284 1643A15 15 0 0 1 2276.500 1656Z" fill="#c0c0c0" stroke="none"/><path d="M2269 1643L2261.500 1656A15 15 0 0 1 2254 1643Z" fill="#3a3a3a" stroke="none"/><path d="M2269 1643L2276.500 1656A15 15 0 0 1 2261.500 1656Z" fill="#a0a0a0" stroke="none"/>
<circle cx="2269" cy="1643" r="3" fill="#535353" stroke="#e0e0e0" stroke-width="1.200"/>
<!-- ? box -->
<rect x="2303.500" y="1626" width="34" height="34" stroke="#2a2a2a" stroke-width="2"/>
<!-- hamburger -->
<path d="M2356 1631.500H2390M2356 1643.500H2390M2356 1655.500H2390" stroke="#c8c8c8" stroke-width="6"/>
</g>
<text x="2320.500" y="1653" font-size="27" fill="#f0f0f0" text-anchor="middle" font-family="Liberation Sans,sans-serif">?</text>
<circle cx="2423" cy="1643" r="4.500" fill="#cbcbcb"/><circle cx="2435.500" cy="1643" r="4.500" fill="#cbcbcb"/><circle cx="2448" cy="1643" r="4.500" fill="#cbcbcb"/>
</svg>

</body></html>
